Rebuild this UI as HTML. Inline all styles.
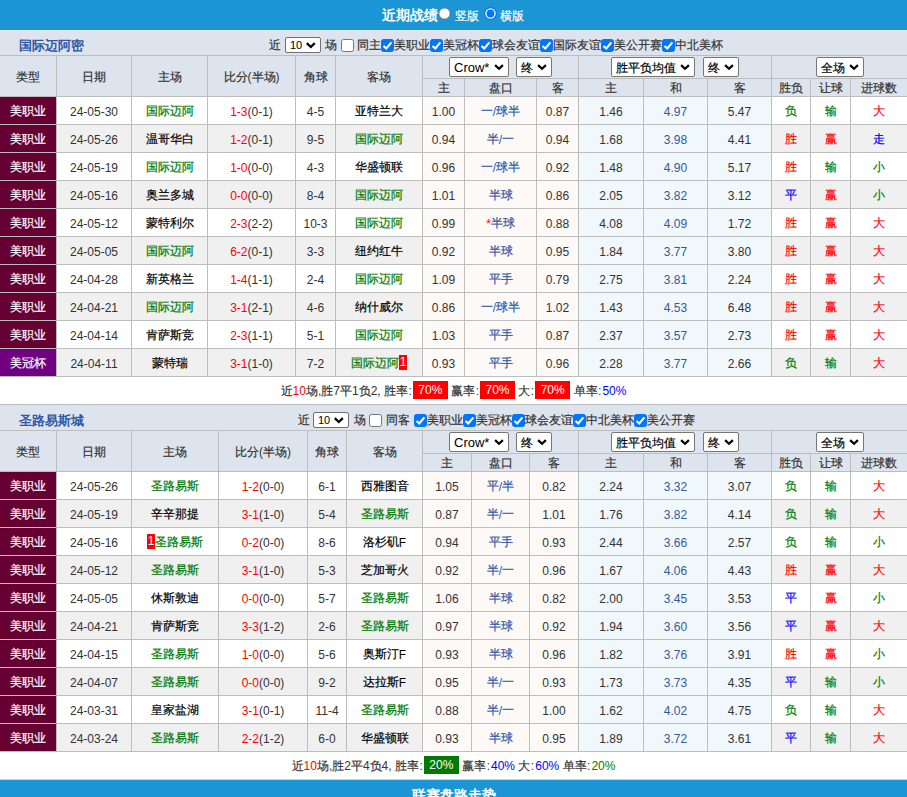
<!DOCTYPE html><html><head><meta charset="utf-8"><style>
*{margin:0;padding:0;box-sizing:border-box}
html,body{width:907px;height:797px;overflow:hidden;background:#fff}
body{font-family:"Liberation Sans",sans-serif;font-size:12px;color:#333;position:relative}
.a{position:absolute}
.k{-webkit-text-stroke:0.2px currentColor}.bt .k{-webkit-text-stroke:0}.tt .k{-webkit-text-stroke:0}
.c{display:flex;align-items:center;justify-content:center;white-space:nowrap}
.sel{height:20px;border:1px solid #767676;border-radius:2px;background:#fff;color:#000}.sel>span{position:absolute;left:4px;top:1px;line-height:18px;white-space:nowrap}.sel svg{position:absolute;right:4px;top:6px}
.ft{height:25px;line-height:25px;font-size:12px;color:#333;white-space:nowrap}
.cb{display:block;width:13px;height:13px;border:1px solid #767676;border-radius:2.5px;background:#fff;position:relative}
.cb.on{background:#0075ff;border-color:#0075ff}
.cb svg{position:absolute;left:-1px;top:-1px}
.smsel{width:36px;height:16px;border:1px solid #707070;border-radius:2px;background:#fff;font-size:11px;color:#000}.smsel>span{position:absolute;left:4px;top:0;line-height:14px}.smsel svg{position:absolute;left:20px;top:4px}
.rd{width:12px;height:12px;border-radius:50%;background:#fff;border:1px solid #767676}
.rd.on{border:none;width:13px;height:13px;background:radial-gradient(circle at 6.5px 6.5px,#0075ff 0,#0075ff 3.6px,#fff 4px,#fff 5.1px,#0075ff 5.5px)}
.rc{background:#f00;color:#fff;display:inline-block;width:8px;text-align:center;line-height:15px;height:15px;position:relative;top:-1px}
.bd{display:inline-block;color:#fff;width:35px;text-align:center;line-height:18px;font-size:12px;margin:0;vertical-align:top;position:relative;top:-2px}
</style></head><body><div class="a" style="left:0px;top:0px;width:907px;height:30px;background:#1b95d4;"></div>
<div class="a bt" style="left:382px;top:0;height:30px;line-height:30px;color:#fff;font-weight:bold;font-size:14px;white-space:nowrap"><span class="k">近期战绩</span></div>
<svg class="a" style="left:437.7px;top:6.8px" width="13" height="13" viewBox="0 0 13 13"><circle cx="6.5" cy="6.5" r="5.6" fill="#fff" stroke="#767676" stroke-width="1"/></svg>
<div class="a" style="left:455px;top:1px;height:30px;line-height:30px;color:#fff;font-size:12px;white-space:nowrap"><span class="k">竖版</span></div>
<svg class="a" style="left:484px;top:6.5px" width="13" height="13" viewBox="0 0 13 13"><circle cx="6.5" cy="6.5" r="6.4" fill="#0075ff"/><circle cx="6.5" cy="6.5" r="5.2" fill="#fff"/><circle cx="6.5" cy="6.5" r="3.9" fill="#0075ff"/></svg>
<div class="a" style="left:500px;top:1px;height:30px;line-height:30px;color:#fff;font-size:12px;white-space:nowrap"><span class="k">横版</span></div>
<div class="a" style="left:0px;top:30px;width:907px;height:25px;background:#dde4ed;"></div>
<div class="a tt" style="left:19px;top:33px;height:25px;line-height:25px;color:#3159a8;font-weight:bold;font-size:13px;"><span class="k">国际迈阿密</span></div>
<div class="a ft" style="left:269px;top:33px"><span class="k">近</span></div><div class="a smsel" style="left:285px;top:37px"><span>10</span><svg width="10" height="7" viewBox="0 0 10 7"><path d="M0.8 1.1 L4.8 5 L8.8 1.1" stroke="#000" stroke-width="2.3" fill="none"/></svg></div><div class="a ft" style="left:325px;top:33px"><span class="k">场</span></div><div class="a" style="left:341px;top:39px"><span class="cb"></span></div><div class="a ft" style="left:357px;top:33px"><span class="k">同主</span></div><div class="a" style="left:381px;top:39px"><span class="cb on"><svg width="13" height="13" viewBox="0 0 13 13"><path d="M2.5 6.9 L5.3 9.5 L10.4 3.4" stroke="#fff" stroke-width="2.1" fill="none"/></svg></span></div><div class="a ft" style="left:394px;top:33px"><span class="k">美职业</span></div><div class="a" style="left:430px;top:39px"><span class="cb on"><svg width="13" height="13" viewBox="0 0 13 13"><path d="M2.5 6.9 L5.3 9.5 L10.4 3.4" stroke="#fff" stroke-width="2.1" fill="none"/></svg></span></div><div class="a ft" style="left:443px;top:33px"><span class="k">美冠杯</span></div><div class="a" style="left:479px;top:39px"><span class="cb on"><svg width="13" height="13" viewBox="0 0 13 13"><path d="M2.5 6.9 L5.3 9.5 L10.4 3.4" stroke="#fff" stroke-width="2.1" fill="none"/></svg></span></div><div class="a ft" style="left:492px;top:33px"><span class="k">球会友谊</span></div><div class="a" style="left:540px;top:39px"><span class="cb on"><svg width="13" height="13" viewBox="0 0 13 13"><path d="M2.5 6.9 L5.3 9.5 L10.4 3.4" stroke="#fff" stroke-width="2.1" fill="none"/></svg></span></div><div class="a ft" style="left:553px;top:33px"><span class="k">国际友谊</span></div><div class="a" style="left:601px;top:39px"><span class="cb on"><svg width="13" height="13" viewBox="0 0 13 13"><path d="M2.5 6.9 L5.3 9.5 L10.4 3.4" stroke="#fff" stroke-width="2.1" fill="none"/></svg></span></div><div class="a ft" style="left:614px;top:33px"><span class="k">美公开赛</span></div><div class="a" style="left:662px;top:39px"><span class="cb on"><svg width="13" height="13" viewBox="0 0 13 13"><path d="M2.5 6.9 L5.3 9.5 L10.4 3.4" stroke="#fff" stroke-width="2.1" fill="none"/></svg></span></div><div class="a ft" style="left:675px;top:33px"><span class="k">中北美杯</span></div>
<div class="a" style="left:0px;top:55px;width:907px;height:1px;background:#bdbdbd;"></div>
<div class="a" style="left:0px;top:56px;width:907px;height:40px;background:#dde4ed;"></div>
<div class="a" style="left:422px;top:78px;width:485px;height:1px;background:#bdbdbd;"></div>
<div class="a" style="left:0px;top:96px;width:907px;height:1px;background:#bdbdbd;"></div>
<div class="a" style="left:56px;top:56px;width:1px;height:40px;background:#bdbdbd;"></div>
<div class="a" style="left:131px;top:56px;width:1px;height:40px;background:#bdbdbd;"></div>
<div class="a" style="left:207px;top:56px;width:1px;height:40px;background:#bdbdbd;"></div>
<div class="a" style="left:295px;top:56px;width:1px;height:40px;background:#bdbdbd;"></div>
<div class="a" style="left:335px;top:56px;width:1px;height:40px;background:#bdbdbd;"></div>
<div class="a" style="left:422px;top:56px;width:1px;height:40px;background:#bdbdbd;"></div>
<div class="a" style="left:464px;top:79px;width:1px;height:17px;background:#bdbdbd;"></div>
<div class="a" style="left:536px;top:79px;width:1px;height:17px;background:#bdbdbd;"></div>
<div class="a" style="left:578px;top:56px;width:1px;height:40px;background:#bdbdbd;"></div>
<div class="a" style="left:643px;top:79px;width:1px;height:17px;background:#bdbdbd;"></div>
<div class="a" style="left:707px;top:79px;width:1px;height:17px;background:#bdbdbd;"></div>
<div class="a" style="left:771px;top:56px;width:1px;height:40px;background:#bdbdbd;"></div>
<div class="a" style="left:810px;top:79px;width:1px;height:17px;background:#bdbdbd;"></div>
<div class="a" style="left:850px;top:79px;width:1px;height:17px;background:#bdbdbd;"></div>
<div class="a" style="left:422px;top:56px;width:1px;height:40px;background:#bdbdbd;"></div>
<div class="a c" style="left:0px;top:57px;width:56px;height:40px;color:#333333;font-size:12px;"><span class="k">类型</span></div>
<div class="a c" style="left:57px;top:57px;width:74px;height:40px;color:#333333;font-size:12px;"><span class="k">日期</span></div>
<div class="a c" style="left:132px;top:57px;width:75px;height:40px;color:#333333;font-size:12px;"><span class="k">主场</span></div>
<div class="a c" style="left:208px;top:57px;width:87px;height:40px;color:#333333;font-size:12px;"><span class="k">比分</span>(<span class="k">半场</span>)</div>
<div class="a c" style="left:296px;top:57px;width:39px;height:40px;color:#333333;font-size:12px;"><span class="k">角球</span></div>
<div class="a c" style="left:336px;top:57px;width:86px;height:40px;color:#333333;font-size:12px;"><span class="k">客场</span></div>
<div class="a c" style="left:423px;top:80px;width:41px;height:17px;color:#333333;font-size:12px;"><span class="k">主</span></div>
<div class="a c" style="left:465px;top:80px;width:71px;height:17px;color:#333333;font-size:12px;"><span class="k">盘口</span></div>
<div class="a c" style="left:537px;top:80px;width:41px;height:17px;color:#333333;font-size:12px;"><span class="k">客</span></div>
<div class="a c" style="left:579px;top:80px;width:64px;height:17px;color:#333333;font-size:12px;"><span class="k">主</span></div>
<div class="a c" style="left:644px;top:80px;width:63px;height:17px;color:#333333;font-size:12px;"><span class="k">和</span></div>
<div class="a c" style="left:708px;top:80px;width:63px;height:17px;color:#333333;font-size:12px;"><span class="k">客</span></div>
<div class="a c" style="left:772px;top:80px;width:38px;height:17px;color:#333333;font-size:12px;"><span class="k">胜负</span></div>
<div class="a c" style="left:811px;top:80px;width:39px;height:17px;color:#333333;font-size:12px;"><span class="k">让球</span></div>
<div class="a c" style="left:851px;top:80px;width:56px;height:17px;color:#333333;font-size:12px;"><span class="k">进球数</span></div>
<div class="a sel" style="left:449px;top:57px;width:60px;"><span style="font-size:13px">Crow*</span><svg width="10" height="7" viewBox="0 0 10 7"><path d="M1.1 1.1 L5 4.8 L8.9 1.1" stroke="#000" stroke-width="2.2" fill="none"/></svg></div>
<div class="a sel" style="left:516px;top:57px;width:36px;"><span style="font-size:12px"><span class="k">终</span></span><svg width="10" height="7" viewBox="0 0 10 7"><path d="M1.1 1.1 L5 4.8 L8.9 1.1" stroke="#000" stroke-width="2.2" fill="none"/></svg></div>
<div class="a sel" style="left:611px;top:57px;width:84px;"><span style="font-size:12px"><span class="k">胜平负均值</span></span><svg width="10" height="7" viewBox="0 0 10 7"><path d="M1.1 1.1 L5 4.8 L8.9 1.1" stroke="#000" stroke-width="2.2" fill="none"/></svg></div>
<div class="a sel" style="left:703px;top:57px;width:36px;"><span style="font-size:12px"><span class="k">终</span></span><svg width="10" height="7" viewBox="0 0 10 7"><path d="M1.1 1.1 L5 4.8 L8.9 1.1" stroke="#000" stroke-width="2.2" fill="none"/></svg></div>
<div class="a sel" style="left:816px;top:57px;width:48px;"><span style="font-size:12px"><span class="k">全场</span></span><svg width="10" height="7" viewBox="0 0 10 7"><path d="M1.1 1.1 L5 4.8 L8.9 1.1" stroke="#000" stroke-width="2.2" fill="none"/></svg></div>
<div class="a" style="left:0px;top:97px;width:907px;height:27px;background:#ffffff;"></div>
<div class="a" style="left:0px;top:97px;width:56px;height:27px;background:#660033;"></div>
<div class="a" style="left:423px;top:97px;width:155px;height:27px;background:#fdf9f6;"></div>
<div class="a" style="left:579px;top:97px;width:192px;height:27px;background:#f0f8fc;"></div>
<div class="a c" style="left:0px;top:98px;width:56px;height:27px;color:#ffffff;font-size:12px;"><span class="k">美职业</span></div>
<div class="a c" style="left:57px;top:98px;width:74px;height:27px;color:#333333;font-size:12px;">24-05-30</div>
<div class="a c" style="left:132px;top:98px;width:75px;height:27px;color:#007a00;font-size:12px;"><span class="k">国际迈阿</span></div>
<div class="a c" style="left:208px;top:98px;width:87px;height:27px;color:#333333;font-size:12px;"><span style="color:#ff0000">1-3</span>(0-1)</div>
<div class="a c" style="left:296px;top:98px;width:39px;height:27px;color:#333333;font-size:12px;">4-5</div>
<div class="a c ns" style="left:336px;top:98px;width:86px;height:27px;color:#000;font-size:12px;"><span class="k">亚特兰大</span></div>
<div class="a c" style="left:423px;top:98px;width:41px;height:27px;color:#333333;font-size:12px;">1.00</div>
<div class="a c" style="left:465px;top:98px;width:71px;height:27px;color:#2f58a6;font-size:12px;"><span class="k">一</span>/<span class="k">球半</span></div>
<div class="a c" style="left:537px;top:98px;width:41px;height:27px;color:#333333;font-size:12px;">0.87</div>
<div class="a c" style="left:579px;top:98px;width:64px;height:27px;color:#333333;font-size:12px;">1.46</div>
<div class="a c" style="left:644px;top:98px;width:63px;height:27px;color:#34589c;font-size:12px;">4.97</div>
<div class="a c" style="left:708px;top:98px;width:63px;height:27px;color:#333333;font-size:12px;">5.47</div>
<div class="a c" style="left:772px;top:98px;width:38px;height:27px;color:#007a00;font-size:12px;"><span class="k">负</span></div>
<div class="a c" style="left:811px;top:98px;width:39px;height:27px;color:#007a00;font-size:12px;"><span class="k">输</span></div>
<div class="a c" style="left:851px;top:98px;width:56px;height:27px;color:#ff0000;font-size:12px;"><span class="k">大</span></div>
<div class="a" style="left:0px;top:124px;width:907px;height:1px;background:#bdbdbd;"></div>
<div class="a" style="left:56px;top:97px;width:1px;height:27px;background:#bdbdbd;"></div>
<div class="a" style="left:131px;top:97px;width:1px;height:27px;background:#bdbdbd;"></div>
<div class="a" style="left:207px;top:97px;width:1px;height:27px;background:#bdbdbd;"></div>
<div class="a" style="left:295px;top:97px;width:1px;height:27px;background:#bdbdbd;"></div>
<div class="a" style="left:335px;top:97px;width:1px;height:27px;background:#bdbdbd;"></div>
<div class="a" style="left:422px;top:97px;width:1px;height:27px;background:#bdbdbd;"></div>
<div class="a" style="left:464px;top:97px;width:1px;height:27px;background:#bdbdbd;"></div>
<div class="a" style="left:536px;top:97px;width:1px;height:27px;background:#bdbdbd;"></div>
<div class="a" style="left:578px;top:97px;width:1px;height:27px;background:#bdbdbd;"></div>
<div class="a" style="left:643px;top:97px;width:1px;height:27px;background:#bdbdbd;"></div>
<div class="a" style="left:707px;top:97px;width:1px;height:27px;background:#bdbdbd;"></div>
<div class="a" style="left:771px;top:97px;width:1px;height:27px;background:#bdbdbd;"></div>
<div class="a" style="left:810px;top:97px;width:1px;height:27px;background:#bdbdbd;"></div>
<div class="a" style="left:850px;top:97px;width:1px;height:27px;background:#bdbdbd;"></div>
<div class="a" style="left:0px;top:125px;width:907px;height:27px;background:#f0f0f0;"></div>
<div class="a" style="left:0px;top:125px;width:56px;height:27px;background:#660033;"></div>
<div class="a" style="left:423px;top:125px;width:155px;height:27px;background:#fdf9f6;"></div>
<div class="a" style="left:579px;top:125px;width:192px;height:27px;background:#f0f8fc;"></div>
<div class="a c" style="left:0px;top:126px;width:56px;height:27px;color:#ffffff;font-size:12px;"><span class="k">美职业</span></div>
<div class="a c" style="left:57px;top:126px;width:74px;height:27px;color:#333333;font-size:12px;">24-05-26</div>
<div class="a c ns" style="left:132px;top:126px;width:75px;height:27px;color:#000;font-size:12px;"><span class="k">温哥华白</span></div>
<div class="a c" style="left:208px;top:126px;width:87px;height:27px;color:#333333;font-size:12px;"><span style="color:#ff0000">1-2</span>(0-1)</div>
<div class="a c" style="left:296px;top:126px;width:39px;height:27px;color:#333333;font-size:12px;">9-5</div>
<div class="a c" style="left:336px;top:126px;width:86px;height:27px;color:#007a00;font-size:12px;"><span class="k">国际迈阿</span></div>
<div class="a c" style="left:423px;top:126px;width:41px;height:27px;color:#333333;font-size:12px;">0.94</div>
<div class="a c" style="left:465px;top:126px;width:71px;height:27px;color:#2f58a6;font-size:12px;"><span class="k">半</span>/<span class="k">一</span></div>
<div class="a c" style="left:537px;top:126px;width:41px;height:27px;color:#333333;font-size:12px;">0.94</div>
<div class="a c" style="left:579px;top:126px;width:64px;height:27px;color:#333333;font-size:12px;">1.68</div>
<div class="a c" style="left:644px;top:126px;width:63px;height:27px;color:#34589c;font-size:12px;">3.98</div>
<div class="a c" style="left:708px;top:126px;width:63px;height:27px;color:#333333;font-size:12px;">4.41</div>
<div class="a c" style="left:772px;top:126px;width:38px;height:27px;color:#ff0000;font-size:12px;"><span class="k">胜</span></div>
<div class="a c" style="left:811px;top:126px;width:39px;height:27px;color:#ff0000;font-size:12px;"><span class="k">赢</span></div>
<div class="a c" style="left:851px;top:126px;width:56px;height:27px;color:#0000ff;font-size:12px;"><span class="k">走</span></div>
<div class="a" style="left:0px;top:152px;width:907px;height:1px;background:#bdbdbd;"></div>
<div class="a" style="left:56px;top:125px;width:1px;height:27px;background:#bdbdbd;"></div>
<div class="a" style="left:131px;top:125px;width:1px;height:27px;background:#bdbdbd;"></div>
<div class="a" style="left:207px;top:125px;width:1px;height:27px;background:#bdbdbd;"></div>
<div class="a" style="left:295px;top:125px;width:1px;height:27px;background:#bdbdbd;"></div>
<div class="a" style="left:335px;top:125px;width:1px;height:27px;background:#bdbdbd;"></div>
<div class="a" style="left:422px;top:125px;width:1px;height:27px;background:#bdbdbd;"></div>
<div class="a" style="left:464px;top:125px;width:1px;height:27px;background:#bdbdbd;"></div>
<div class="a" style="left:536px;top:125px;width:1px;height:27px;background:#bdbdbd;"></div>
<div class="a" style="left:578px;top:125px;width:1px;height:27px;background:#bdbdbd;"></div>
<div class="a" style="left:643px;top:125px;width:1px;height:27px;background:#bdbdbd;"></div>
<div class="a" style="left:707px;top:125px;width:1px;height:27px;background:#bdbdbd;"></div>
<div class="a" style="left:771px;top:125px;width:1px;height:27px;background:#bdbdbd;"></div>
<div class="a" style="left:810px;top:125px;width:1px;height:27px;background:#bdbdbd;"></div>
<div class="a" style="left:850px;top:125px;width:1px;height:27px;background:#bdbdbd;"></div>
<div class="a" style="left:0px;top:153px;width:907px;height:27px;background:#ffffff;"></div>
<div class="a" style="left:0px;top:153px;width:56px;height:27px;background:#660033;"></div>
<div class="a" style="left:423px;top:153px;width:155px;height:27px;background:#fdf9f6;"></div>
<div class="a" style="left:579px;top:153px;width:192px;height:27px;background:#f0f8fc;"></div>
<div class="a c" style="left:0px;top:154px;width:56px;height:27px;color:#ffffff;font-size:12px;"><span class="k">美职业</span></div>
<div class="a c" style="left:57px;top:154px;width:74px;height:27px;color:#333333;font-size:12px;">24-05-19</div>
<div class="a c" style="left:132px;top:154px;width:75px;height:27px;color:#007a00;font-size:12px;"><span class="k">国际迈阿</span></div>
<div class="a c" style="left:208px;top:154px;width:87px;height:27px;color:#333333;font-size:12px;"><span style="color:#ff0000">1-0</span>(0-0)</div>
<div class="a c" style="left:296px;top:154px;width:39px;height:27px;color:#333333;font-size:12px;">4-3</div>
<div class="a c ns" style="left:336px;top:154px;width:86px;height:27px;color:#000;font-size:12px;"><span class="k">华盛顿联</span></div>
<div class="a c" style="left:423px;top:154px;width:41px;height:27px;color:#333333;font-size:12px;">0.96</div>
<div class="a c" style="left:465px;top:154px;width:71px;height:27px;color:#2f58a6;font-size:12px;"><span class="k">一</span>/<span class="k">球半</span></div>
<div class="a c" style="left:537px;top:154px;width:41px;height:27px;color:#333333;font-size:12px;">0.92</div>
<div class="a c" style="left:579px;top:154px;width:64px;height:27px;color:#333333;font-size:12px;">1.48</div>
<div class="a c" style="left:644px;top:154px;width:63px;height:27px;color:#34589c;font-size:12px;">4.90</div>
<div class="a c" style="left:708px;top:154px;width:63px;height:27px;color:#333333;font-size:12px;">5.17</div>
<div class="a c" style="left:772px;top:154px;width:38px;height:27px;color:#ff0000;font-size:12px;"><span class="k">胜</span></div>
<div class="a c" style="left:811px;top:154px;width:39px;height:27px;color:#007a00;font-size:12px;"><span class="k">输</span></div>
<div class="a c" style="left:851px;top:154px;width:56px;height:27px;color:#007a00;font-size:12px;"><span class="k">小</span></div>
<div class="a" style="left:0px;top:180px;width:907px;height:1px;background:#bdbdbd;"></div>
<div class="a" style="left:56px;top:153px;width:1px;height:27px;background:#bdbdbd;"></div>
<div class="a" style="left:131px;top:153px;width:1px;height:27px;background:#bdbdbd;"></div>
<div class="a" style="left:207px;top:153px;width:1px;height:27px;background:#bdbdbd;"></div>
<div class="a" style="left:295px;top:153px;width:1px;height:27px;background:#bdbdbd;"></div>
<div class="a" style="left:335px;top:153px;width:1px;height:27px;background:#bdbdbd;"></div>
<div class="a" style="left:422px;top:153px;width:1px;height:27px;background:#bdbdbd;"></div>
<div class="a" style="left:464px;top:153px;width:1px;height:27px;background:#bdbdbd;"></div>
<div class="a" style="left:536px;top:153px;width:1px;height:27px;background:#bdbdbd;"></div>
<div class="a" style="left:578px;top:153px;width:1px;height:27px;background:#bdbdbd;"></div>
<div class="a" style="left:643px;top:153px;width:1px;height:27px;background:#bdbdbd;"></div>
<div class="a" style="left:707px;top:153px;width:1px;height:27px;background:#bdbdbd;"></div>
<div class="a" style="left:771px;top:153px;width:1px;height:27px;background:#bdbdbd;"></div>
<div class="a" style="left:810px;top:153px;width:1px;height:27px;background:#bdbdbd;"></div>
<div class="a" style="left:850px;top:153px;width:1px;height:27px;background:#bdbdbd;"></div>
<div class="a" style="left:0px;top:181px;width:907px;height:27px;background:#f0f0f0;"></div>
<div class="a" style="left:0px;top:181px;width:56px;height:27px;background:#660033;"></div>
<div class="a" style="left:423px;top:181px;width:155px;height:27px;background:#fdf9f6;"></div>
<div class="a" style="left:579px;top:181px;width:192px;height:27px;background:#f0f8fc;"></div>
<div class="a c" style="left:0px;top:182px;width:56px;height:27px;color:#ffffff;font-size:12px;"><span class="k">美职业</span></div>
<div class="a c" style="left:57px;top:182px;width:74px;height:27px;color:#333333;font-size:12px;">24-05-16</div>
<div class="a c ns" style="left:132px;top:182px;width:75px;height:27px;color:#000;font-size:12px;"><span class="k">奥兰多城</span></div>
<div class="a c" style="left:208px;top:182px;width:87px;height:27px;color:#333333;font-size:12px;"><span style="color:#ff0000">0-0</span>(0-0)</div>
<div class="a c" style="left:296px;top:182px;width:39px;height:27px;color:#333333;font-size:12px;">8-4</div>
<div class="a c" style="left:336px;top:182px;width:86px;height:27px;color:#007a00;font-size:12px;"><span class="k">国际迈阿</span></div>
<div class="a c" style="left:423px;top:182px;width:41px;height:27px;color:#333333;font-size:12px;">1.01</div>
<div class="a c" style="left:465px;top:182px;width:71px;height:27px;color:#2f58a6;font-size:12px;"><span class="k">半球</span></div>
<div class="a c" style="left:537px;top:182px;width:41px;height:27px;color:#333333;font-size:12px;">0.86</div>
<div class="a c" style="left:579px;top:182px;width:64px;height:27px;color:#333333;font-size:12px;">2.05</div>
<div class="a c" style="left:644px;top:182px;width:63px;height:27px;color:#34589c;font-size:12px;">3.82</div>
<div class="a c" style="left:708px;top:182px;width:63px;height:27px;color:#333333;font-size:12px;">3.12</div>
<div class="a c" style="left:772px;top:182px;width:38px;height:27px;color:#0000ff;font-size:12px;"><span class="k">平</span></div>
<div class="a c" style="left:811px;top:182px;width:39px;height:27px;color:#ff0000;font-size:12px;"><span class="k">赢</span></div>
<div class="a c" style="left:851px;top:182px;width:56px;height:27px;color:#007a00;font-size:12px;"><span class="k">小</span></div>
<div class="a" style="left:0px;top:208px;width:907px;height:1px;background:#bdbdbd;"></div>
<div class="a" style="left:56px;top:181px;width:1px;height:27px;background:#bdbdbd;"></div>
<div class="a" style="left:131px;top:181px;width:1px;height:27px;background:#bdbdbd;"></div>
<div class="a" style="left:207px;top:181px;width:1px;height:27px;background:#bdbdbd;"></div>
<div class="a" style="left:295px;top:181px;width:1px;height:27px;background:#bdbdbd;"></div>
<div class="a" style="left:335px;top:181px;width:1px;height:27px;background:#bdbdbd;"></div>
<div class="a" style="left:422px;top:181px;width:1px;height:27px;background:#bdbdbd;"></div>
<div class="a" style="left:464px;top:181px;width:1px;height:27px;background:#bdbdbd;"></div>
<div class="a" style="left:536px;top:181px;width:1px;height:27px;background:#bdbdbd;"></div>
<div class="a" style="left:578px;top:181px;width:1px;height:27px;background:#bdbdbd;"></div>
<div class="a" style="left:643px;top:181px;width:1px;height:27px;background:#bdbdbd;"></div>
<div class="a" style="left:707px;top:181px;width:1px;height:27px;background:#bdbdbd;"></div>
<div class="a" style="left:771px;top:181px;width:1px;height:27px;background:#bdbdbd;"></div>
<div class="a" style="left:810px;top:181px;width:1px;height:27px;background:#bdbdbd;"></div>
<div class="a" style="left:850px;top:181px;width:1px;height:27px;background:#bdbdbd;"></div>
<div class="a" style="left:0px;top:209px;width:907px;height:27px;background:#ffffff;"></div>
<div class="a" style="left:0px;top:209px;width:56px;height:27px;background:#660033;"></div>
<div class="a" style="left:423px;top:209px;width:155px;height:27px;background:#fdf9f6;"></div>
<div class="a" style="left:579px;top:209px;width:192px;height:27px;background:#f0f8fc;"></div>
<div class="a c" style="left:0px;top:210px;width:56px;height:27px;color:#ffffff;font-size:12px;"><span class="k">美职业</span></div>
<div class="a c" style="left:57px;top:210px;width:74px;height:27px;color:#333333;font-size:12px;">24-05-12</div>
<div class="a c ns" style="left:132px;top:210px;width:75px;height:27px;color:#000;font-size:12px;"><span class="k">蒙特利尔</span></div>
<div class="a c" style="left:208px;top:210px;width:87px;height:27px;color:#333333;font-size:12px;"><span style="color:#ff0000">2-3</span>(2-2)</div>
<div class="a c" style="left:296px;top:210px;width:39px;height:27px;color:#333333;font-size:12px;">10-3</div>
<div class="a c" style="left:336px;top:210px;width:86px;height:27px;color:#007a00;font-size:12px;"><span class="k">国际迈阿</span></div>
<div class="a c" style="left:423px;top:210px;width:41px;height:27px;color:#333333;font-size:12px;">0.99</div>
<div class="a c" style="left:465px;top:210px;width:71px;height:27px;color:#2f58a6;font-size:12px;"><span style="color:#ff0000">*</span><span class="k">半球</span></div>
<div class="a c" style="left:537px;top:210px;width:41px;height:27px;color:#333333;font-size:12px;">0.88</div>
<div class="a c" style="left:579px;top:210px;width:64px;height:27px;color:#333333;font-size:12px;">4.08</div>
<div class="a c" style="left:644px;top:210px;width:63px;height:27px;color:#34589c;font-size:12px;">4.09</div>
<div class="a c" style="left:708px;top:210px;width:63px;height:27px;color:#333333;font-size:12px;">1.72</div>
<div class="a c" style="left:772px;top:210px;width:38px;height:27px;color:#ff0000;font-size:12px;"><span class="k">胜</span></div>
<div class="a c" style="left:811px;top:210px;width:39px;height:27px;color:#ff0000;font-size:12px;"><span class="k">赢</span></div>
<div class="a c" style="left:851px;top:210px;width:56px;height:27px;color:#ff0000;font-size:12px;"><span class="k">大</span></div>
<div class="a" style="left:0px;top:236px;width:907px;height:1px;background:#bdbdbd;"></div>
<div class="a" style="left:56px;top:209px;width:1px;height:27px;background:#bdbdbd;"></div>
<div class="a" style="left:131px;top:209px;width:1px;height:27px;background:#bdbdbd;"></div>
<div class="a" style="left:207px;top:209px;width:1px;height:27px;background:#bdbdbd;"></div>
<div class="a" style="left:295px;top:209px;width:1px;height:27px;background:#bdbdbd;"></div>
<div class="a" style="left:335px;top:209px;width:1px;height:27px;background:#bdbdbd;"></div>
<div class="a" style="left:422px;top:209px;width:1px;height:27px;background:#bdbdbd;"></div>
<div class="a" style="left:464px;top:209px;width:1px;height:27px;background:#bdbdbd;"></div>
<div class="a" style="left:536px;top:209px;width:1px;height:27px;background:#bdbdbd;"></div>
<div class="a" style="left:578px;top:209px;width:1px;height:27px;background:#bdbdbd;"></div>
<div class="a" style="left:643px;top:209px;width:1px;height:27px;background:#bdbdbd;"></div>
<div class="a" style="left:707px;top:209px;width:1px;height:27px;background:#bdbdbd;"></div>
<div class="a" style="left:771px;top:209px;width:1px;height:27px;background:#bdbdbd;"></div>
<div class="a" style="left:810px;top:209px;width:1px;height:27px;background:#bdbdbd;"></div>
<div class="a" style="left:850px;top:209px;width:1px;height:27px;background:#bdbdbd;"></div>
<div class="a" style="left:0px;top:237px;width:907px;height:27px;background:#f0f0f0;"></div>
<div class="a" style="left:0px;top:237px;width:56px;height:27px;background:#660033;"></div>
<div class="a" style="left:423px;top:237px;width:155px;height:27px;background:#fdf9f6;"></div>
<div class="a" style="left:579px;top:237px;width:192px;height:27px;background:#f0f8fc;"></div>
<div class="a c" style="left:0px;top:238px;width:56px;height:27px;color:#ffffff;font-size:12px;"><span class="k">美职业</span></div>
<div class="a c" style="left:57px;top:238px;width:74px;height:27px;color:#333333;font-size:12px;">24-05-05</div>
<div class="a c" style="left:132px;top:238px;width:75px;height:27px;color:#007a00;font-size:12px;"><span class="k">国际迈阿</span></div>
<div class="a c" style="left:208px;top:238px;width:87px;height:27px;color:#333333;font-size:12px;"><span style="color:#ff0000">6-2</span>(0-1)</div>
<div class="a c" style="left:296px;top:238px;width:39px;height:27px;color:#333333;font-size:12px;">3-3</div>
<div class="a c ns" style="left:336px;top:238px;width:86px;height:27px;color:#000;font-size:12px;"><span class="k">纽约红牛</span></div>
<div class="a c" style="left:423px;top:238px;width:41px;height:27px;color:#333333;font-size:12px;">0.92</div>
<div class="a c" style="left:465px;top:238px;width:71px;height:27px;color:#2f58a6;font-size:12px;"><span class="k">半球</span></div>
<div class="a c" style="left:537px;top:238px;width:41px;height:27px;color:#333333;font-size:12px;">0.95</div>
<div class="a c" style="left:579px;top:238px;width:64px;height:27px;color:#333333;font-size:12px;">1.84</div>
<div class="a c" style="left:644px;top:238px;width:63px;height:27px;color:#34589c;font-size:12px;">3.77</div>
<div class="a c" style="left:708px;top:238px;width:63px;height:27px;color:#333333;font-size:12px;">3.80</div>
<div class="a c" style="left:772px;top:238px;width:38px;height:27px;color:#ff0000;font-size:12px;"><span class="k">胜</span></div>
<div class="a c" style="left:811px;top:238px;width:39px;height:27px;color:#ff0000;font-size:12px;"><span class="k">赢</span></div>
<div class="a c" style="left:851px;top:238px;width:56px;height:27px;color:#ff0000;font-size:12px;"><span class="k">大</span></div>
<div class="a" style="left:0px;top:264px;width:907px;height:1px;background:#bdbdbd;"></div>
<div class="a" style="left:56px;top:237px;width:1px;height:27px;background:#bdbdbd;"></div>
<div class="a" style="left:131px;top:237px;width:1px;height:27px;background:#bdbdbd;"></div>
<div class="a" style="left:207px;top:237px;width:1px;height:27px;background:#bdbdbd;"></div>
<div class="a" style="left:295px;top:237px;width:1px;height:27px;background:#bdbdbd;"></div>
<div class="a" style="left:335px;top:237px;width:1px;height:27px;background:#bdbdbd;"></div>
<div class="a" style="left:422px;top:237px;width:1px;height:27px;background:#bdbdbd;"></div>
<div class="a" style="left:464px;top:237px;width:1px;height:27px;background:#bdbdbd;"></div>
<div class="a" style="left:536px;top:237px;width:1px;height:27px;background:#bdbdbd;"></div>
<div class="a" style="left:578px;top:237px;width:1px;height:27px;background:#bdbdbd;"></div>
<div class="a" style="left:643px;top:237px;width:1px;height:27px;background:#bdbdbd;"></div>
<div class="a" style="left:707px;top:237px;width:1px;height:27px;background:#bdbdbd;"></div>
<div class="a" style="left:771px;top:237px;width:1px;height:27px;background:#bdbdbd;"></div>
<div class="a" style="left:810px;top:237px;width:1px;height:27px;background:#bdbdbd;"></div>
<div class="a" style="left:850px;top:237px;width:1px;height:27px;background:#bdbdbd;"></div>
<div class="a" style="left:0px;top:265px;width:907px;height:27px;background:#ffffff;"></div>
<div class="a" style="left:0px;top:265px;width:56px;height:27px;background:#660033;"></div>
<div class="a" style="left:423px;top:265px;width:155px;height:27px;background:#fdf9f6;"></div>
<div class="a" style="left:579px;top:265px;width:192px;height:27px;background:#f0f8fc;"></div>
<div class="a c" style="left:0px;top:266px;width:56px;height:27px;color:#ffffff;font-size:12px;"><span class="k">美职业</span></div>
<div class="a c" style="left:57px;top:266px;width:74px;height:27px;color:#333333;font-size:12px;">24-04-28</div>
<div class="a c ns" style="left:132px;top:266px;width:75px;height:27px;color:#000;font-size:12px;"><span class="k">新英格兰</span></div>
<div class="a c" style="left:208px;top:266px;width:87px;height:27px;color:#333333;font-size:12px;"><span style="color:#ff0000">1-4</span>(1-1)</div>
<div class="a c" style="left:296px;top:266px;width:39px;height:27px;color:#333333;font-size:12px;">2-4</div>
<div class="a c" style="left:336px;top:266px;width:86px;height:27px;color:#007a00;font-size:12px;"><span class="k">国际迈阿</span></div>
<div class="a c" style="left:423px;top:266px;width:41px;height:27px;color:#333333;font-size:12px;">1.09</div>
<div class="a c" style="left:465px;top:266px;width:71px;height:27px;color:#2f58a6;font-size:12px;"><span class="k">平手</span></div>
<div class="a c" style="left:537px;top:266px;width:41px;height:27px;color:#333333;font-size:12px;">0.79</div>
<div class="a c" style="left:579px;top:266px;width:64px;height:27px;color:#333333;font-size:12px;">2.75</div>
<div class="a c" style="left:644px;top:266px;width:63px;height:27px;color:#34589c;font-size:12px;">3.81</div>
<div class="a c" style="left:708px;top:266px;width:63px;height:27px;color:#333333;font-size:12px;">2.24</div>
<div class="a c" style="left:772px;top:266px;width:38px;height:27px;color:#ff0000;font-size:12px;"><span class="k">胜</span></div>
<div class="a c" style="left:811px;top:266px;width:39px;height:27px;color:#ff0000;font-size:12px;"><span class="k">赢</span></div>
<div class="a c" style="left:851px;top:266px;width:56px;height:27px;color:#ff0000;font-size:12px;"><span class="k">大</span></div>
<div class="a" style="left:0px;top:292px;width:907px;height:1px;background:#bdbdbd;"></div>
<div class="a" style="left:56px;top:265px;width:1px;height:27px;background:#bdbdbd;"></div>
<div class="a" style="left:131px;top:265px;width:1px;height:27px;background:#bdbdbd;"></div>
<div class="a" style="left:207px;top:265px;width:1px;height:27px;background:#bdbdbd;"></div>
<div class="a" style="left:295px;top:265px;width:1px;height:27px;background:#bdbdbd;"></div>
<div class="a" style="left:335px;top:265px;width:1px;height:27px;background:#bdbdbd;"></div>
<div class="a" style="left:422px;top:265px;width:1px;height:27px;background:#bdbdbd;"></div>
<div class="a" style="left:464px;top:265px;width:1px;height:27px;background:#bdbdbd;"></div>
<div class="a" style="left:536px;top:265px;width:1px;height:27px;background:#bdbdbd;"></div>
<div class="a" style="left:578px;top:265px;width:1px;height:27px;background:#bdbdbd;"></div>
<div class="a" style="left:643px;top:265px;width:1px;height:27px;background:#bdbdbd;"></div>
<div class="a" style="left:707px;top:265px;width:1px;height:27px;background:#bdbdbd;"></div>
<div class="a" style="left:771px;top:265px;width:1px;height:27px;background:#bdbdbd;"></div>
<div class="a" style="left:810px;top:265px;width:1px;height:27px;background:#bdbdbd;"></div>
<div class="a" style="left:850px;top:265px;width:1px;height:27px;background:#bdbdbd;"></div>
<div class="a" style="left:0px;top:293px;width:907px;height:27px;background:#f0f0f0;"></div>
<div class="a" style="left:0px;top:293px;width:56px;height:27px;background:#660033;"></div>
<div class="a" style="left:423px;top:293px;width:155px;height:27px;background:#fdf9f6;"></div>
<div class="a" style="left:579px;top:293px;width:192px;height:27px;background:#f0f8fc;"></div>
<div class="a c" style="left:0px;top:294px;width:56px;height:27px;color:#ffffff;font-size:12px;"><span class="k">美职业</span></div>
<div class="a c" style="left:57px;top:294px;width:74px;height:27px;color:#333333;font-size:12px;">24-04-21</div>
<div class="a c" style="left:132px;top:294px;width:75px;height:27px;color:#007a00;font-size:12px;"><span class="k">国际迈阿</span></div>
<div class="a c" style="left:208px;top:294px;width:87px;height:27px;color:#333333;font-size:12px;"><span style="color:#ff0000">3-1</span>(2-1)</div>
<div class="a c" style="left:296px;top:294px;width:39px;height:27px;color:#333333;font-size:12px;">4-6</div>
<div class="a c ns" style="left:336px;top:294px;width:86px;height:27px;color:#000;font-size:12px;"><span class="k">纳什威尔</span></div>
<div class="a c" style="left:423px;top:294px;width:41px;height:27px;color:#333333;font-size:12px;">0.86</div>
<div class="a c" style="left:465px;top:294px;width:71px;height:27px;color:#2f58a6;font-size:12px;"><span class="k">一</span>/<span class="k">球半</span></div>
<div class="a c" style="left:537px;top:294px;width:41px;height:27px;color:#333333;font-size:12px;">1.02</div>
<div class="a c" style="left:579px;top:294px;width:64px;height:27px;color:#333333;font-size:12px;">1.43</div>
<div class="a c" style="left:644px;top:294px;width:63px;height:27px;color:#34589c;font-size:12px;">4.53</div>
<div class="a c" style="left:708px;top:294px;width:63px;height:27px;color:#333333;font-size:12px;">6.48</div>
<div class="a c" style="left:772px;top:294px;width:38px;height:27px;color:#ff0000;font-size:12px;"><span class="k">胜</span></div>
<div class="a c" style="left:811px;top:294px;width:39px;height:27px;color:#ff0000;font-size:12px;"><span class="k">赢</span></div>
<div class="a c" style="left:851px;top:294px;width:56px;height:27px;color:#ff0000;font-size:12px;"><span class="k">大</span></div>
<div class="a" style="left:0px;top:320px;width:907px;height:1px;background:#bdbdbd;"></div>
<div class="a" style="left:56px;top:293px;width:1px;height:27px;background:#bdbdbd;"></div>
<div class="a" style="left:131px;top:293px;width:1px;height:27px;background:#bdbdbd;"></div>
<div class="a" style="left:207px;top:293px;width:1px;height:27px;background:#bdbdbd;"></div>
<div class="a" style="left:295px;top:293px;width:1px;height:27px;background:#bdbdbd;"></div>
<div class="a" style="left:335px;top:293px;width:1px;height:27px;background:#bdbdbd;"></div>
<div class="a" style="left:422px;top:293px;width:1px;height:27px;background:#bdbdbd;"></div>
<div class="a" style="left:464px;top:293px;width:1px;height:27px;background:#bdbdbd;"></div>
<div class="a" style="left:536px;top:293px;width:1px;height:27px;background:#bdbdbd;"></div>
<div class="a" style="left:578px;top:293px;width:1px;height:27px;background:#bdbdbd;"></div>
<div class="a" style="left:643px;top:293px;width:1px;height:27px;background:#bdbdbd;"></div>
<div class="a" style="left:707px;top:293px;width:1px;height:27px;background:#bdbdbd;"></div>
<div class="a" style="left:771px;top:293px;width:1px;height:27px;background:#bdbdbd;"></div>
<div class="a" style="left:810px;top:293px;width:1px;height:27px;background:#bdbdbd;"></div>
<div class="a" style="left:850px;top:293px;width:1px;height:27px;background:#bdbdbd;"></div>
<div class="a" style="left:0px;top:321px;width:907px;height:27px;background:#ffffff;"></div>
<div class="a" style="left:0px;top:321px;width:56px;height:27px;background:#660033;"></div>
<div class="a" style="left:423px;top:321px;width:155px;height:27px;background:#fdf9f6;"></div>
<div class="a" style="left:579px;top:321px;width:192px;height:27px;background:#f0f8fc;"></div>
<div class="a c" style="left:0px;top:322px;width:56px;height:27px;color:#ffffff;font-size:12px;"><span class="k">美职业</span></div>
<div class="a c" style="left:57px;top:322px;width:74px;height:27px;color:#333333;font-size:12px;">24-04-14</div>
<div class="a c ns" style="left:132px;top:322px;width:75px;height:27px;color:#000;font-size:12px;"><span class="k">肯萨斯竞</span></div>
<div class="a c" style="left:208px;top:322px;width:87px;height:27px;color:#333333;font-size:12px;"><span style="color:#ff0000">2-3</span>(1-1)</div>
<div class="a c" style="left:296px;top:322px;width:39px;height:27px;color:#333333;font-size:12px;">5-1</div>
<div class="a c" style="left:336px;top:322px;width:86px;height:27px;color:#007a00;font-size:12px;"><span class="k">国际迈阿</span></div>
<div class="a c" style="left:423px;top:322px;width:41px;height:27px;color:#333333;font-size:12px;">1.03</div>
<div class="a c" style="left:465px;top:322px;width:71px;height:27px;color:#2f58a6;font-size:12px;"><span class="k">平手</span></div>
<div class="a c" style="left:537px;top:322px;width:41px;height:27px;color:#333333;font-size:12px;">0.87</div>
<div class="a c" style="left:579px;top:322px;width:64px;height:27px;color:#333333;font-size:12px;">2.37</div>
<div class="a c" style="left:644px;top:322px;width:63px;height:27px;color:#34589c;font-size:12px;">3.57</div>
<div class="a c" style="left:708px;top:322px;width:63px;height:27px;color:#333333;font-size:12px;">2.73</div>
<div class="a c" style="left:772px;top:322px;width:38px;height:27px;color:#ff0000;font-size:12px;"><span class="k">胜</span></div>
<div class="a c" style="left:811px;top:322px;width:39px;height:27px;color:#ff0000;font-size:12px;"><span class="k">赢</span></div>
<div class="a c" style="left:851px;top:322px;width:56px;height:27px;color:#ff0000;font-size:12px;"><span class="k">大</span></div>
<div class="a" style="left:0px;top:348px;width:907px;height:1px;background:#bdbdbd;"></div>
<div class="a" style="left:56px;top:321px;width:1px;height:27px;background:#bdbdbd;"></div>
<div class="a" style="left:131px;top:321px;width:1px;height:27px;background:#bdbdbd;"></div>
<div class="a" style="left:207px;top:321px;width:1px;height:27px;background:#bdbdbd;"></div>
<div class="a" style="left:295px;top:321px;width:1px;height:27px;background:#bdbdbd;"></div>
<div class="a" style="left:335px;top:321px;width:1px;height:27px;background:#bdbdbd;"></div>
<div class="a" style="left:422px;top:321px;width:1px;height:27px;background:#bdbdbd;"></div>
<div class="a" style="left:464px;top:321px;width:1px;height:27px;background:#bdbdbd;"></div>
<div class="a" style="left:536px;top:321px;width:1px;height:27px;background:#bdbdbd;"></div>
<div class="a" style="left:578px;top:321px;width:1px;height:27px;background:#bdbdbd;"></div>
<div class="a" style="left:643px;top:321px;width:1px;height:27px;background:#bdbdbd;"></div>
<div class="a" style="left:707px;top:321px;width:1px;height:27px;background:#bdbdbd;"></div>
<div class="a" style="left:771px;top:321px;width:1px;height:27px;background:#bdbdbd;"></div>
<div class="a" style="left:810px;top:321px;width:1px;height:27px;background:#bdbdbd;"></div>
<div class="a" style="left:850px;top:321px;width:1px;height:27px;background:#bdbdbd;"></div>
<div class="a" style="left:0px;top:349px;width:907px;height:27px;background:#f0f0f0;"></div>
<div class="a" style="left:0px;top:349px;width:56px;height:27px;background:#700080;"></div>
<div class="a" style="left:423px;top:349px;width:155px;height:27px;background:#fdf9f6;"></div>
<div class="a" style="left:579px;top:349px;width:192px;height:27px;background:#f0f8fc;"></div>
<div class="a c" style="left:0px;top:350px;width:56px;height:27px;color:#ffffff;font-size:12px;"><span class="k">美冠杯</span></div>
<div class="a c" style="left:57px;top:350px;width:74px;height:27px;color:#333333;font-size:12px;">24-04-11</div>
<div class="a c ns" style="left:132px;top:350px;width:75px;height:27px;color:#000;font-size:12px;"><span class="k">蒙特瑞</span></div>
<div class="a c" style="left:208px;top:350px;width:87px;height:27px;color:#333333;font-size:12px;"><span style="color:#ff0000">3-1</span>(1-0)</div>
<div class="a c" style="left:296px;top:350px;width:39px;height:27px;color:#333333;font-size:12px;">7-2</div>
<div class="a c" style="left:336px;top:350px;width:86px;height:27px;color:#007a00;font-size:12px;"><span class="k">国际迈阿</span><span class="rc">1</span></div>
<div class="a c" style="left:423px;top:350px;width:41px;height:27px;color:#333333;font-size:12px;">0.93</div>
<div class="a c" style="left:465px;top:350px;width:71px;height:27px;color:#2f58a6;font-size:12px;"><span class="k">平手</span></div>
<div class="a c" style="left:537px;top:350px;width:41px;height:27px;color:#333333;font-size:12px;">0.96</div>
<div class="a c" style="left:579px;top:350px;width:64px;height:27px;color:#333333;font-size:12px;">2.28</div>
<div class="a c" style="left:644px;top:350px;width:63px;height:27px;color:#34589c;font-size:12px;">3.77</div>
<div class="a c" style="left:708px;top:350px;width:63px;height:27px;color:#333333;font-size:12px;">2.66</div>
<div class="a c" style="left:772px;top:350px;width:38px;height:27px;color:#007a00;font-size:12px;"><span class="k">负</span></div>
<div class="a c" style="left:811px;top:350px;width:39px;height:27px;color:#007a00;font-size:12px;"><span class="k">输</span></div>
<div class="a c" style="left:851px;top:350px;width:56px;height:27px;color:#ff0000;font-size:12px;"><span class="k">大</span></div>
<div class="a" style="left:0px;top:376px;width:907px;height:1px;background:#bdbdbd;"></div>
<div class="a" style="left:56px;top:349px;width:1px;height:27px;background:#bdbdbd;"></div>
<div class="a" style="left:131px;top:349px;width:1px;height:27px;background:#bdbdbd;"></div>
<div class="a" style="left:207px;top:349px;width:1px;height:27px;background:#bdbdbd;"></div>
<div class="a" style="left:295px;top:349px;width:1px;height:27px;background:#bdbdbd;"></div>
<div class="a" style="left:335px;top:349px;width:1px;height:27px;background:#bdbdbd;"></div>
<div class="a" style="left:422px;top:349px;width:1px;height:27px;background:#bdbdbd;"></div>
<div class="a" style="left:464px;top:349px;width:1px;height:27px;background:#bdbdbd;"></div>
<div class="a" style="left:536px;top:349px;width:1px;height:27px;background:#bdbdbd;"></div>
<div class="a" style="left:578px;top:349px;width:1px;height:27px;background:#bdbdbd;"></div>
<div class="a" style="left:643px;top:349px;width:1px;height:27px;background:#bdbdbd;"></div>
<div class="a" style="left:707px;top:349px;width:1px;height:27px;background:#bdbdbd;"></div>
<div class="a" style="left:771px;top:349px;width:1px;height:27px;background:#bdbdbd;"></div>
<div class="a" style="left:810px;top:349px;width:1px;height:27px;background:#bdbdbd;"></div>
<div class="a" style="left:850px;top:349px;width:1px;height:27px;background:#bdbdbd;"></div>
<div class="a" style="left:0px;top:377px;width:907px;height:27px;background:#ffffff;"></div>
<div class="a c" style="left:0;top:378px;width:907px;height:27px;color:#333333;font-size:12px;"><span><span class="k">近</span><span style="color:#ff0000">10</span><span class="k">场</span>,<span class="k">胜</span>7<span class="k">平</span>1<span class="k">负</span>2, <span class="k">胜率</span><span style="padding:0 1px 0 .5px">:</span><span class="bd" style="background:#ff0000">70%</span> <span class="k">赢率</span><span style="padding:0 1px 0 .5px">:</span><span class="bd" style="background:#ff0000">70%</span> <span class="k">大</span><span style="padding:0 1px 0 .5px">:</span><span class="bd" style="background:#ff0000">70%</span> <span class="k">单率</span><span style="padding:0 1px 0 .5px">:</span><span style="color:#0000ff">50%</span></span></div>
<div class="a" style="left:0px;top:30px;width:907px;height:1px;background:#e5e7ea;"></div>
<div class="a" style="left:0px;top:404px;width:907px;height:1px;background:#bdbdbd;"></div>
<div class="a" style="left:0px;top:405px;width:907px;height:25px;background:#dde4ed;"></div>
<div class="a tt" style="left:19px;top:408px;height:25px;line-height:25px;color:#3159a8;font-weight:bold;font-size:13px;"><span class="k">圣路易斯城</span></div>
<div class="a ft" style="left:298px;top:408px"><span class="k">近</span></div><div class="a smsel" style="left:313px;top:412px"><span>10</span><svg width="10" height="7" viewBox="0 0 10 7"><path d="M0.8 1.1 L4.8 5 L8.8 1.1" stroke="#000" stroke-width="2.3" fill="none"/></svg></div><div class="a ft" style="left:354px;top:408px"><span class="k">场</span></div><div class="a" style="left:369px;top:414px"><span class="cb"></span></div><div class="a ft" style="left:386px;top:408px"><span class="k">同客</span></div><div class="a" style="left:414px;top:414px"><span class="cb on"><svg width="13" height="13" viewBox="0 0 13 13"><path d="M2.5 6.9 L5.3 9.5 L10.4 3.4" stroke="#fff" stroke-width="2.1" fill="none"/></svg></span></div><div class="a ft" style="left:427px;top:408px"><span class="k">美职业</span></div><div class="a" style="left:463px;top:414px"><span class="cb on"><svg width="13" height="13" viewBox="0 0 13 13"><path d="M2.5 6.9 L5.3 9.5 L10.4 3.4" stroke="#fff" stroke-width="2.1" fill="none"/></svg></span></div><div class="a ft" style="left:476px;top:408px"><span class="k">美冠杯</span></div><div class="a" style="left:512px;top:414px"><span class="cb on"><svg width="13" height="13" viewBox="0 0 13 13"><path d="M2.5 6.9 L5.3 9.5 L10.4 3.4" stroke="#fff" stroke-width="2.1" fill="none"/></svg></span></div><div class="a ft" style="left:525px;top:408px"><span class="k">球会友谊</span></div><div class="a" style="left:573px;top:414px"><span class="cb on"><svg width="13" height="13" viewBox="0 0 13 13"><path d="M2.5 6.9 L5.3 9.5 L10.4 3.4" stroke="#fff" stroke-width="2.1" fill="none"/></svg></span></div><div class="a ft" style="left:586px;top:408px"><span class="k">中北美杯</span></div><div class="a" style="left:634px;top:414px"><span class="cb on"><svg width="13" height="13" viewBox="0 0 13 13"><path d="M2.5 6.9 L5.3 9.5 L10.4 3.4" stroke="#fff" stroke-width="2.1" fill="none"/></svg></span></div><div class="a ft" style="left:647px;top:408px"><span class="k">美公开赛</span></div>
<div class="a" style="left:0px;top:430px;width:907px;height:1px;background:#bdbdbd;"></div>
<div class="a" style="left:0px;top:431px;width:907px;height:40px;background:#dde4ed;"></div>
<div class="a" style="left:422px;top:453px;width:485px;height:1px;background:#bdbdbd;"></div>
<div class="a" style="left:0px;top:471px;width:907px;height:1px;background:#bdbdbd;"></div>
<div class="a" style="left:56px;top:431px;width:1px;height:40px;background:#bdbdbd;"></div>
<div class="a" style="left:131px;top:431px;width:1px;height:40px;background:#bdbdbd;"></div>
<div class="a" style="left:218px;top:431px;width:1px;height:40px;background:#bdbdbd;"></div>
<div class="a" style="left:307px;top:431px;width:1px;height:40px;background:#bdbdbd;"></div>
<div class="a" style="left:346px;top:431px;width:1px;height:40px;background:#bdbdbd;"></div>
<div class="a" style="left:422px;top:431px;width:1px;height:40px;background:#bdbdbd;"></div>
<div class="a" style="left:471px;top:454px;width:1px;height:17px;background:#bdbdbd;"></div>
<div class="a" style="left:529px;top:454px;width:1px;height:17px;background:#bdbdbd;"></div>
<div class="a" style="left:578px;top:431px;width:1px;height:40px;background:#bdbdbd;"></div>
<div class="a" style="left:643px;top:454px;width:1px;height:17px;background:#bdbdbd;"></div>
<div class="a" style="left:707px;top:454px;width:1px;height:17px;background:#bdbdbd;"></div>
<div class="a" style="left:771px;top:431px;width:1px;height:40px;background:#bdbdbd;"></div>
<div class="a" style="left:810px;top:454px;width:1px;height:17px;background:#bdbdbd;"></div>
<div class="a" style="left:850px;top:454px;width:1px;height:17px;background:#bdbdbd;"></div>
<div class="a" style="left:422px;top:431px;width:1px;height:40px;background:#bdbdbd;"></div>
<div class="a c" style="left:0px;top:432px;width:56px;height:40px;color:#333333;font-size:12px;"><span class="k">类型</span></div>
<div class="a c" style="left:57px;top:432px;width:74px;height:40px;color:#333333;font-size:12px;"><span class="k">日期</span></div>
<div class="a c" style="left:132px;top:432px;width:86px;height:40px;color:#333333;font-size:12px;"><span class="k">主场</span></div>
<div class="a c" style="left:219px;top:432px;width:88px;height:40px;color:#333333;font-size:12px;"><span class="k">比分</span>(<span class="k">半场</span>)</div>
<div class="a c" style="left:308px;top:432px;width:38px;height:40px;color:#333333;font-size:12px;"><span class="k">角球</span></div>
<div class="a c" style="left:347px;top:432px;width:75px;height:40px;color:#333333;font-size:12px;"><span class="k">客场</span></div>
<div class="a c" style="left:423px;top:455px;width:48px;height:17px;color:#333333;font-size:12px;"><span class="k">主</span></div>
<div class="a c" style="left:472px;top:455px;width:57px;height:17px;color:#333333;font-size:12px;"><span class="k">盘口</span></div>
<div class="a c" style="left:530px;top:455px;width:48px;height:17px;color:#333333;font-size:12px;"><span class="k">客</span></div>
<div class="a c" style="left:579px;top:455px;width:64px;height:17px;color:#333333;font-size:12px;"><span class="k">主</span></div>
<div class="a c" style="left:644px;top:455px;width:63px;height:17px;color:#333333;font-size:12px;"><span class="k">和</span></div>
<div class="a c" style="left:708px;top:455px;width:63px;height:17px;color:#333333;font-size:12px;"><span class="k">客</span></div>
<div class="a c" style="left:772px;top:455px;width:38px;height:17px;color:#333333;font-size:12px;"><span class="k">胜负</span></div>
<div class="a c" style="left:811px;top:455px;width:39px;height:17px;color:#333333;font-size:12px;"><span class="k">让球</span></div>
<div class="a c" style="left:851px;top:455px;width:56px;height:17px;color:#333333;font-size:12px;"><span class="k">进球数</span></div>
<div class="a sel" style="left:449px;top:432px;width:60px;"><span style="font-size:13px">Crow*</span><svg width="10" height="7" viewBox="0 0 10 7"><path d="M1.1 1.1 L5 4.8 L8.9 1.1" stroke="#000" stroke-width="2.2" fill="none"/></svg></div>
<div class="a sel" style="left:516px;top:432px;width:36px;"><span style="font-size:12px"><span class="k">终</span></span><svg width="10" height="7" viewBox="0 0 10 7"><path d="M1.1 1.1 L5 4.8 L8.9 1.1" stroke="#000" stroke-width="2.2" fill="none"/></svg></div>
<div class="a sel" style="left:611px;top:432px;width:84px;"><span style="font-size:12px"><span class="k">胜平负均值</span></span><svg width="10" height="7" viewBox="0 0 10 7"><path d="M1.1 1.1 L5 4.8 L8.9 1.1" stroke="#000" stroke-width="2.2" fill="none"/></svg></div>
<div class="a sel" style="left:703px;top:432px;width:36px;"><span style="font-size:12px"><span class="k">终</span></span><svg width="10" height="7" viewBox="0 0 10 7"><path d="M1.1 1.1 L5 4.8 L8.9 1.1" stroke="#000" stroke-width="2.2" fill="none"/></svg></div>
<div class="a sel" style="left:816px;top:432px;width:48px;"><span style="font-size:12px"><span class="k">全场</span></span><svg width="10" height="7" viewBox="0 0 10 7"><path d="M1.1 1.1 L5 4.8 L8.9 1.1" stroke="#000" stroke-width="2.2" fill="none"/></svg></div>
<div class="a" style="left:0px;top:472px;width:907px;height:27px;background:#ffffff;"></div>
<div class="a" style="left:0px;top:472px;width:56px;height:27px;background:#660033;"></div>
<div class="a" style="left:423px;top:472px;width:155px;height:27px;background:#fdf9f6;"></div>
<div class="a" style="left:579px;top:472px;width:192px;height:27px;background:#f0f8fc;"></div>
<div class="a c" style="left:0px;top:473px;width:56px;height:27px;color:#ffffff;font-size:12px;"><span class="k">美职业</span></div>
<div class="a c" style="left:57px;top:473px;width:74px;height:27px;color:#333333;font-size:12px;">24-05-26</div>
<div class="a c" style="left:132px;top:473px;width:86px;height:27px;color:#007a00;font-size:12px;"><span class="k">圣路易斯</span></div>
<div class="a c" style="left:219px;top:473px;width:88px;height:27px;color:#333333;font-size:12px;"><span style="color:#ff0000">1-2</span>(0-0)</div>
<div class="a c" style="left:308px;top:473px;width:38px;height:27px;color:#333333;font-size:12px;">6-1</div>
<div class="a c ns" style="left:347px;top:473px;width:75px;height:27px;color:#000;font-size:12px;"><span class="k">西雅图音</span></div>
<div class="a c" style="left:423px;top:473px;width:48px;height:27px;color:#333333;font-size:12px;">1.05</div>
<div class="a c" style="left:472px;top:473px;width:57px;height:27px;color:#2f58a6;font-size:12px;"><span class="k">平</span>/<span class="k">半</span></div>
<div class="a c" style="left:530px;top:473px;width:48px;height:27px;color:#333333;font-size:12px;">0.82</div>
<div class="a c" style="left:579px;top:473px;width:64px;height:27px;color:#333333;font-size:12px;">2.24</div>
<div class="a c" style="left:644px;top:473px;width:63px;height:27px;color:#34589c;font-size:12px;">3.32</div>
<div class="a c" style="left:708px;top:473px;width:63px;height:27px;color:#333333;font-size:12px;">3.07</div>
<div class="a c" style="left:772px;top:473px;width:38px;height:27px;color:#007a00;font-size:12px;"><span class="k">负</span></div>
<div class="a c" style="left:811px;top:473px;width:39px;height:27px;color:#007a00;font-size:12px;"><span class="k">输</span></div>
<div class="a c" style="left:851px;top:473px;width:56px;height:27px;color:#ff0000;font-size:12px;"><span class="k">大</span></div>
<div class="a" style="left:0px;top:499px;width:907px;height:1px;background:#bdbdbd;"></div>
<div class="a" style="left:56px;top:472px;width:1px;height:27px;background:#bdbdbd;"></div>
<div class="a" style="left:131px;top:472px;width:1px;height:27px;background:#bdbdbd;"></div>
<div class="a" style="left:218px;top:472px;width:1px;height:27px;background:#bdbdbd;"></div>
<div class="a" style="left:307px;top:472px;width:1px;height:27px;background:#bdbdbd;"></div>
<div class="a" style="left:346px;top:472px;width:1px;height:27px;background:#bdbdbd;"></div>
<div class="a" style="left:422px;top:472px;width:1px;height:27px;background:#bdbdbd;"></div>
<div class="a" style="left:471px;top:472px;width:1px;height:27px;background:#bdbdbd;"></div>
<div class="a" style="left:529px;top:472px;width:1px;height:27px;background:#bdbdbd;"></div>
<div class="a" style="left:578px;top:472px;width:1px;height:27px;background:#bdbdbd;"></div>
<div class="a" style="left:643px;top:472px;width:1px;height:27px;background:#bdbdbd;"></div>
<div class="a" style="left:707px;top:472px;width:1px;height:27px;background:#bdbdbd;"></div>
<div class="a" style="left:771px;top:472px;width:1px;height:27px;background:#bdbdbd;"></div>
<div class="a" style="left:810px;top:472px;width:1px;height:27px;background:#bdbdbd;"></div>
<div class="a" style="left:850px;top:472px;width:1px;height:27px;background:#bdbdbd;"></div>
<div class="a" style="left:0px;top:500px;width:907px;height:27px;background:#f0f0f0;"></div>
<div class="a" style="left:0px;top:500px;width:56px;height:27px;background:#660033;"></div>
<div class="a" style="left:423px;top:500px;width:155px;height:27px;background:#fdf9f6;"></div>
<div class="a" style="left:579px;top:500px;width:192px;height:27px;background:#f0f8fc;"></div>
<div class="a c" style="left:0px;top:501px;width:56px;height:27px;color:#ffffff;font-size:12px;"><span class="k">美职业</span></div>
<div class="a c" style="left:57px;top:501px;width:74px;height:27px;color:#333333;font-size:12px;">24-05-19</div>
<div class="a c ns" style="left:132px;top:501px;width:86px;height:27px;color:#000;font-size:12px;"><span class="k">辛辛那提</span></div>
<div class="a c" style="left:219px;top:501px;width:88px;height:27px;color:#333333;font-size:12px;"><span style="color:#ff0000">3-1</span>(1-0)</div>
<div class="a c" style="left:308px;top:501px;width:38px;height:27px;color:#333333;font-size:12px;">5-4</div>
<div class="a c" style="left:347px;top:501px;width:75px;height:27px;color:#007a00;font-size:12px;"><span class="k">圣路易斯</span></div>
<div class="a c" style="left:423px;top:501px;width:48px;height:27px;color:#333333;font-size:12px;">0.87</div>
<div class="a c" style="left:472px;top:501px;width:57px;height:27px;color:#2f58a6;font-size:12px;"><span class="k">半</span>/<span class="k">一</span></div>
<div class="a c" style="left:530px;top:501px;width:48px;height:27px;color:#333333;font-size:12px;">1.01</div>
<div class="a c" style="left:579px;top:501px;width:64px;height:27px;color:#333333;font-size:12px;">1.76</div>
<div class="a c" style="left:644px;top:501px;width:63px;height:27px;color:#34589c;font-size:12px;">3.82</div>
<div class="a c" style="left:708px;top:501px;width:63px;height:27px;color:#333333;font-size:12px;">4.14</div>
<div class="a c" style="left:772px;top:501px;width:38px;height:27px;color:#007a00;font-size:12px;"><span class="k">负</span></div>
<div class="a c" style="left:811px;top:501px;width:39px;height:27px;color:#007a00;font-size:12px;"><span class="k">输</span></div>
<div class="a c" style="left:851px;top:501px;width:56px;height:27px;color:#ff0000;font-size:12px;"><span class="k">大</span></div>
<div class="a" style="left:0px;top:527px;width:907px;height:1px;background:#bdbdbd;"></div>
<div class="a" style="left:56px;top:500px;width:1px;height:27px;background:#bdbdbd;"></div>
<div class="a" style="left:131px;top:500px;width:1px;height:27px;background:#bdbdbd;"></div>
<div class="a" style="left:218px;top:500px;width:1px;height:27px;background:#bdbdbd;"></div>
<div class="a" style="left:307px;top:500px;width:1px;height:27px;background:#bdbdbd;"></div>
<div class="a" style="left:346px;top:500px;width:1px;height:27px;background:#bdbdbd;"></div>
<div class="a" style="left:422px;top:500px;width:1px;height:27px;background:#bdbdbd;"></div>
<div class="a" style="left:471px;top:500px;width:1px;height:27px;background:#bdbdbd;"></div>
<div class="a" style="left:529px;top:500px;width:1px;height:27px;background:#bdbdbd;"></div>
<div class="a" style="left:578px;top:500px;width:1px;height:27px;background:#bdbdbd;"></div>
<div class="a" style="left:643px;top:500px;width:1px;height:27px;background:#bdbdbd;"></div>
<div class="a" style="left:707px;top:500px;width:1px;height:27px;background:#bdbdbd;"></div>
<div class="a" style="left:771px;top:500px;width:1px;height:27px;background:#bdbdbd;"></div>
<div class="a" style="left:810px;top:500px;width:1px;height:27px;background:#bdbdbd;"></div>
<div class="a" style="left:850px;top:500px;width:1px;height:27px;background:#bdbdbd;"></div>
<div class="a" style="left:0px;top:528px;width:907px;height:27px;background:#ffffff;"></div>
<div class="a" style="left:0px;top:528px;width:56px;height:27px;background:#660033;"></div>
<div class="a" style="left:423px;top:528px;width:155px;height:27px;background:#fdf9f6;"></div>
<div class="a" style="left:579px;top:528px;width:192px;height:27px;background:#f0f8fc;"></div>
<div class="a c" style="left:0px;top:529px;width:56px;height:27px;color:#ffffff;font-size:12px;"><span class="k">美职业</span></div>
<div class="a c" style="left:57px;top:529px;width:74px;height:27px;color:#333333;font-size:12px;">24-05-16</div>
<div class="a c" style="left:132px;top:529px;width:86px;height:27px;color:#007a00;font-size:12px;"><span class="rc">1</span><span class="k">圣路易斯</span></div>
<div class="a c" style="left:219px;top:529px;width:88px;height:27px;color:#333333;font-size:12px;"><span style="color:#ff0000">0-2</span>(0-0)</div>
<div class="a c" style="left:308px;top:529px;width:38px;height:27px;color:#333333;font-size:12px;">8-6</div>
<div class="a c ns" style="left:347px;top:529px;width:75px;height:27px;color:#000;font-size:12px;"><span class="k">洛杉矶</span>F</div>
<div class="a c" style="left:423px;top:529px;width:48px;height:27px;color:#333333;font-size:12px;">0.94</div>
<div class="a c" style="left:472px;top:529px;width:57px;height:27px;color:#2f58a6;font-size:12px;"><span class="k">平手</span></div>
<div class="a c" style="left:530px;top:529px;width:48px;height:27px;color:#333333;font-size:12px;">0.93</div>
<div class="a c" style="left:579px;top:529px;width:64px;height:27px;color:#333333;font-size:12px;">2.44</div>
<div class="a c" style="left:644px;top:529px;width:63px;height:27px;color:#34589c;font-size:12px;">3.66</div>
<div class="a c" style="left:708px;top:529px;width:63px;height:27px;color:#333333;font-size:12px;">2.57</div>
<div class="a c" style="left:772px;top:529px;width:38px;height:27px;color:#007a00;font-size:12px;"><span class="k">负</span></div>
<div class="a c" style="left:811px;top:529px;width:39px;height:27px;color:#007a00;font-size:12px;"><span class="k">输</span></div>
<div class="a c" style="left:851px;top:529px;width:56px;height:27px;color:#007a00;font-size:12px;"><span class="k">小</span></div>
<div class="a" style="left:0px;top:555px;width:907px;height:1px;background:#bdbdbd;"></div>
<div class="a" style="left:56px;top:528px;width:1px;height:27px;background:#bdbdbd;"></div>
<div class="a" style="left:131px;top:528px;width:1px;height:27px;background:#bdbdbd;"></div>
<div class="a" style="left:218px;top:528px;width:1px;height:27px;background:#bdbdbd;"></div>
<div class="a" style="left:307px;top:528px;width:1px;height:27px;background:#bdbdbd;"></div>
<div class="a" style="left:346px;top:528px;width:1px;height:27px;background:#bdbdbd;"></div>
<div class="a" style="left:422px;top:528px;width:1px;height:27px;background:#bdbdbd;"></div>
<div class="a" style="left:471px;top:528px;width:1px;height:27px;background:#bdbdbd;"></div>
<div class="a" style="left:529px;top:528px;width:1px;height:27px;background:#bdbdbd;"></div>
<div class="a" style="left:578px;top:528px;width:1px;height:27px;background:#bdbdbd;"></div>
<div class="a" style="left:643px;top:528px;width:1px;height:27px;background:#bdbdbd;"></div>
<div class="a" style="left:707px;top:528px;width:1px;height:27px;background:#bdbdbd;"></div>
<div class="a" style="left:771px;top:528px;width:1px;height:27px;background:#bdbdbd;"></div>
<div class="a" style="left:810px;top:528px;width:1px;height:27px;background:#bdbdbd;"></div>
<div class="a" style="left:850px;top:528px;width:1px;height:27px;background:#bdbdbd;"></div>
<div class="a" style="left:0px;top:556px;width:907px;height:27px;background:#f0f0f0;"></div>
<div class="a" style="left:0px;top:556px;width:56px;height:27px;background:#660033;"></div>
<div class="a" style="left:423px;top:556px;width:155px;height:27px;background:#fdf9f6;"></div>
<div class="a" style="left:579px;top:556px;width:192px;height:27px;background:#f0f8fc;"></div>
<div class="a c" style="left:0px;top:557px;width:56px;height:27px;color:#ffffff;font-size:12px;"><span class="k">美职业</span></div>
<div class="a c" style="left:57px;top:557px;width:74px;height:27px;color:#333333;font-size:12px;">24-05-12</div>
<div class="a c" style="left:132px;top:557px;width:86px;height:27px;color:#007a00;font-size:12px;"><span class="k">圣路易斯</span></div>
<div class="a c" style="left:219px;top:557px;width:88px;height:27px;color:#333333;font-size:12px;"><span style="color:#ff0000">3-1</span>(1-0)</div>
<div class="a c" style="left:308px;top:557px;width:38px;height:27px;color:#333333;font-size:12px;">5-3</div>
<div class="a c ns" style="left:347px;top:557px;width:75px;height:27px;color:#000;font-size:12px;"><span class="k">芝加哥火</span></div>
<div class="a c" style="left:423px;top:557px;width:48px;height:27px;color:#333333;font-size:12px;">0.92</div>
<div class="a c" style="left:472px;top:557px;width:57px;height:27px;color:#2f58a6;font-size:12px;"><span class="k">半</span>/<span class="k">一</span></div>
<div class="a c" style="left:530px;top:557px;width:48px;height:27px;color:#333333;font-size:12px;">0.96</div>
<div class="a c" style="left:579px;top:557px;width:64px;height:27px;color:#333333;font-size:12px;">1.67</div>
<div class="a c" style="left:644px;top:557px;width:63px;height:27px;color:#34589c;font-size:12px;">4.06</div>
<div class="a c" style="left:708px;top:557px;width:63px;height:27px;color:#333333;font-size:12px;">4.43</div>
<div class="a c" style="left:772px;top:557px;width:38px;height:27px;color:#ff0000;font-size:12px;"><span class="k">胜</span></div>
<div class="a c" style="left:811px;top:557px;width:39px;height:27px;color:#ff0000;font-size:12px;"><span class="k">赢</span></div>
<div class="a c" style="left:851px;top:557px;width:56px;height:27px;color:#ff0000;font-size:12px;"><span class="k">大</span></div>
<div class="a" style="left:0px;top:583px;width:907px;height:1px;background:#bdbdbd;"></div>
<div class="a" style="left:56px;top:556px;width:1px;height:27px;background:#bdbdbd;"></div>
<div class="a" style="left:131px;top:556px;width:1px;height:27px;background:#bdbdbd;"></div>
<div class="a" style="left:218px;top:556px;width:1px;height:27px;background:#bdbdbd;"></div>
<div class="a" style="left:307px;top:556px;width:1px;height:27px;background:#bdbdbd;"></div>
<div class="a" style="left:346px;top:556px;width:1px;height:27px;background:#bdbdbd;"></div>
<div class="a" style="left:422px;top:556px;width:1px;height:27px;background:#bdbdbd;"></div>
<div class="a" style="left:471px;top:556px;width:1px;height:27px;background:#bdbdbd;"></div>
<div class="a" style="left:529px;top:556px;width:1px;height:27px;background:#bdbdbd;"></div>
<div class="a" style="left:578px;top:556px;width:1px;height:27px;background:#bdbdbd;"></div>
<div class="a" style="left:643px;top:556px;width:1px;height:27px;background:#bdbdbd;"></div>
<div class="a" style="left:707px;top:556px;width:1px;height:27px;background:#bdbdbd;"></div>
<div class="a" style="left:771px;top:556px;width:1px;height:27px;background:#bdbdbd;"></div>
<div class="a" style="left:810px;top:556px;width:1px;height:27px;background:#bdbdbd;"></div>
<div class="a" style="left:850px;top:556px;width:1px;height:27px;background:#bdbdbd;"></div>
<div class="a" style="left:0px;top:584px;width:907px;height:27px;background:#ffffff;"></div>
<div class="a" style="left:0px;top:584px;width:56px;height:27px;background:#660033;"></div>
<div class="a" style="left:423px;top:584px;width:155px;height:27px;background:#fdf9f6;"></div>
<div class="a" style="left:579px;top:584px;width:192px;height:27px;background:#f0f8fc;"></div>
<div class="a c" style="left:0px;top:585px;width:56px;height:27px;color:#ffffff;font-size:12px;"><span class="k">美职业</span></div>
<div class="a c" style="left:57px;top:585px;width:74px;height:27px;color:#333333;font-size:12px;">24-05-05</div>
<div class="a c ns" style="left:132px;top:585px;width:86px;height:27px;color:#000;font-size:12px;"><span class="k">休斯敦迪</span></div>
<div class="a c" style="left:219px;top:585px;width:88px;height:27px;color:#333333;font-size:12px;"><span style="color:#ff0000">0-0</span>(0-0)</div>
<div class="a c" style="left:308px;top:585px;width:38px;height:27px;color:#333333;font-size:12px;">5-7</div>
<div class="a c" style="left:347px;top:585px;width:75px;height:27px;color:#007a00;font-size:12px;"><span class="k">圣路易斯</span></div>
<div class="a c" style="left:423px;top:585px;width:48px;height:27px;color:#333333;font-size:12px;">1.06</div>
<div class="a c" style="left:472px;top:585px;width:57px;height:27px;color:#2f58a6;font-size:12px;"><span class="k">半球</span></div>
<div class="a c" style="left:530px;top:585px;width:48px;height:27px;color:#333333;font-size:12px;">0.82</div>
<div class="a c" style="left:579px;top:585px;width:64px;height:27px;color:#333333;font-size:12px;">2.00</div>
<div class="a c" style="left:644px;top:585px;width:63px;height:27px;color:#34589c;font-size:12px;">3.45</div>
<div class="a c" style="left:708px;top:585px;width:63px;height:27px;color:#333333;font-size:12px;">3.53</div>
<div class="a c" style="left:772px;top:585px;width:38px;height:27px;color:#0000ff;font-size:12px;"><span class="k">平</span></div>
<div class="a c" style="left:811px;top:585px;width:39px;height:27px;color:#ff0000;font-size:12px;"><span class="k">赢</span></div>
<div class="a c" style="left:851px;top:585px;width:56px;height:27px;color:#007a00;font-size:12px;"><span class="k">小</span></div>
<div class="a" style="left:0px;top:611px;width:907px;height:1px;background:#bdbdbd;"></div>
<div class="a" style="left:56px;top:584px;width:1px;height:27px;background:#bdbdbd;"></div>
<div class="a" style="left:131px;top:584px;width:1px;height:27px;background:#bdbdbd;"></div>
<div class="a" style="left:218px;top:584px;width:1px;height:27px;background:#bdbdbd;"></div>
<div class="a" style="left:307px;top:584px;width:1px;height:27px;background:#bdbdbd;"></div>
<div class="a" style="left:346px;top:584px;width:1px;height:27px;background:#bdbdbd;"></div>
<div class="a" style="left:422px;top:584px;width:1px;height:27px;background:#bdbdbd;"></div>
<div class="a" style="left:471px;top:584px;width:1px;height:27px;background:#bdbdbd;"></div>
<div class="a" style="left:529px;top:584px;width:1px;height:27px;background:#bdbdbd;"></div>
<div class="a" style="left:578px;top:584px;width:1px;height:27px;background:#bdbdbd;"></div>
<div class="a" style="left:643px;top:584px;width:1px;height:27px;background:#bdbdbd;"></div>
<div class="a" style="left:707px;top:584px;width:1px;height:27px;background:#bdbdbd;"></div>
<div class="a" style="left:771px;top:584px;width:1px;height:27px;background:#bdbdbd;"></div>
<div class="a" style="left:810px;top:584px;width:1px;height:27px;background:#bdbdbd;"></div>
<div class="a" style="left:850px;top:584px;width:1px;height:27px;background:#bdbdbd;"></div>
<div class="a" style="left:0px;top:612px;width:907px;height:27px;background:#f0f0f0;"></div>
<div class="a" style="left:0px;top:612px;width:56px;height:27px;background:#660033;"></div>
<div class="a" style="left:423px;top:612px;width:155px;height:27px;background:#fdf9f6;"></div>
<div class="a" style="left:579px;top:612px;width:192px;height:27px;background:#f0f8fc;"></div>
<div class="a c" style="left:0px;top:613px;width:56px;height:27px;color:#ffffff;font-size:12px;"><span class="k">美职业</span></div>
<div class="a c" style="left:57px;top:613px;width:74px;height:27px;color:#333333;font-size:12px;">24-04-21</div>
<div class="a c ns" style="left:132px;top:613px;width:86px;height:27px;color:#000;font-size:12px;"><span class="k">肯萨斯竞</span></div>
<div class="a c" style="left:219px;top:613px;width:88px;height:27px;color:#333333;font-size:12px;"><span style="color:#ff0000">3-3</span>(1-2)</div>
<div class="a c" style="left:308px;top:613px;width:38px;height:27px;color:#333333;font-size:12px;">2-6</div>
<div class="a c" style="left:347px;top:613px;width:75px;height:27px;color:#007a00;font-size:12px;"><span class="k">圣路易斯</span></div>
<div class="a c" style="left:423px;top:613px;width:48px;height:27px;color:#333333;font-size:12px;">0.97</div>
<div class="a c" style="left:472px;top:613px;width:57px;height:27px;color:#2f58a6;font-size:12px;"><span class="k">半球</span></div>
<div class="a c" style="left:530px;top:613px;width:48px;height:27px;color:#333333;font-size:12px;">0.92</div>
<div class="a c" style="left:579px;top:613px;width:64px;height:27px;color:#333333;font-size:12px;">1.94</div>
<div class="a c" style="left:644px;top:613px;width:63px;height:27px;color:#34589c;font-size:12px;">3.60</div>
<div class="a c" style="left:708px;top:613px;width:63px;height:27px;color:#333333;font-size:12px;">3.56</div>
<div class="a c" style="left:772px;top:613px;width:38px;height:27px;color:#0000ff;font-size:12px;"><span class="k">平</span></div>
<div class="a c" style="left:811px;top:613px;width:39px;height:27px;color:#ff0000;font-size:12px;"><span class="k">赢</span></div>
<div class="a c" style="left:851px;top:613px;width:56px;height:27px;color:#ff0000;font-size:12px;"><span class="k">大</span></div>
<div class="a" style="left:0px;top:639px;width:907px;height:1px;background:#bdbdbd;"></div>
<div class="a" style="left:56px;top:612px;width:1px;height:27px;background:#bdbdbd;"></div>
<div class="a" style="left:131px;top:612px;width:1px;height:27px;background:#bdbdbd;"></div>
<div class="a" style="left:218px;top:612px;width:1px;height:27px;background:#bdbdbd;"></div>
<div class="a" style="left:307px;top:612px;width:1px;height:27px;background:#bdbdbd;"></div>
<div class="a" style="left:346px;top:612px;width:1px;height:27px;background:#bdbdbd;"></div>
<div class="a" style="left:422px;top:612px;width:1px;height:27px;background:#bdbdbd;"></div>
<div class="a" style="left:471px;top:612px;width:1px;height:27px;background:#bdbdbd;"></div>
<div class="a" style="left:529px;top:612px;width:1px;height:27px;background:#bdbdbd;"></div>
<div class="a" style="left:578px;top:612px;width:1px;height:27px;background:#bdbdbd;"></div>
<div class="a" style="left:643px;top:612px;width:1px;height:27px;background:#bdbdbd;"></div>
<div class="a" style="left:707px;top:612px;width:1px;height:27px;background:#bdbdbd;"></div>
<div class="a" style="left:771px;top:612px;width:1px;height:27px;background:#bdbdbd;"></div>
<div class="a" style="left:810px;top:612px;width:1px;height:27px;background:#bdbdbd;"></div>
<div class="a" style="left:850px;top:612px;width:1px;height:27px;background:#bdbdbd;"></div>
<div class="a" style="left:0px;top:640px;width:907px;height:27px;background:#ffffff;"></div>
<div class="a" style="left:0px;top:640px;width:56px;height:27px;background:#660033;"></div>
<div class="a" style="left:423px;top:640px;width:155px;height:27px;background:#fdf9f6;"></div>
<div class="a" style="left:579px;top:640px;width:192px;height:27px;background:#f0f8fc;"></div>
<div class="a c" style="left:0px;top:641px;width:56px;height:27px;color:#ffffff;font-size:12px;"><span class="k">美职业</span></div>
<div class="a c" style="left:57px;top:641px;width:74px;height:27px;color:#333333;font-size:12px;">24-04-15</div>
<div class="a c" style="left:132px;top:641px;width:86px;height:27px;color:#007a00;font-size:12px;"><span class="k">圣路易斯</span></div>
<div class="a c" style="left:219px;top:641px;width:88px;height:27px;color:#333333;font-size:12px;"><span style="color:#ff0000">1-0</span>(0-0)</div>
<div class="a c" style="left:308px;top:641px;width:38px;height:27px;color:#333333;font-size:12px;">5-6</div>
<div class="a c ns" style="left:347px;top:641px;width:75px;height:27px;color:#000;font-size:12px;"><span class="k">奥斯汀</span>F</div>
<div class="a c" style="left:423px;top:641px;width:48px;height:27px;color:#333333;font-size:12px;">0.93</div>
<div class="a c" style="left:472px;top:641px;width:57px;height:27px;color:#2f58a6;font-size:12px;"><span class="k">半球</span></div>
<div class="a c" style="left:530px;top:641px;width:48px;height:27px;color:#333333;font-size:12px;">0.96</div>
<div class="a c" style="left:579px;top:641px;width:64px;height:27px;color:#333333;font-size:12px;">1.82</div>
<div class="a c" style="left:644px;top:641px;width:63px;height:27px;color:#34589c;font-size:12px;">3.76</div>
<div class="a c" style="left:708px;top:641px;width:63px;height:27px;color:#333333;font-size:12px;">3.91</div>
<div class="a c" style="left:772px;top:641px;width:38px;height:27px;color:#ff0000;font-size:12px;"><span class="k">胜</span></div>
<div class="a c" style="left:811px;top:641px;width:39px;height:27px;color:#ff0000;font-size:12px;"><span class="k">赢</span></div>
<div class="a c" style="left:851px;top:641px;width:56px;height:27px;color:#007a00;font-size:12px;"><span class="k">小</span></div>
<div class="a" style="left:0px;top:667px;width:907px;height:1px;background:#bdbdbd;"></div>
<div class="a" style="left:56px;top:640px;width:1px;height:27px;background:#bdbdbd;"></div>
<div class="a" style="left:131px;top:640px;width:1px;height:27px;background:#bdbdbd;"></div>
<div class="a" style="left:218px;top:640px;width:1px;height:27px;background:#bdbdbd;"></div>
<div class="a" style="left:307px;top:640px;width:1px;height:27px;background:#bdbdbd;"></div>
<div class="a" style="left:346px;top:640px;width:1px;height:27px;background:#bdbdbd;"></div>
<div class="a" style="left:422px;top:640px;width:1px;height:27px;background:#bdbdbd;"></div>
<div class="a" style="left:471px;top:640px;width:1px;height:27px;background:#bdbdbd;"></div>
<div class="a" style="left:529px;top:640px;width:1px;height:27px;background:#bdbdbd;"></div>
<div class="a" style="left:578px;top:640px;width:1px;height:27px;background:#bdbdbd;"></div>
<div class="a" style="left:643px;top:640px;width:1px;height:27px;background:#bdbdbd;"></div>
<div class="a" style="left:707px;top:640px;width:1px;height:27px;background:#bdbdbd;"></div>
<div class="a" style="left:771px;top:640px;width:1px;height:27px;background:#bdbdbd;"></div>
<div class="a" style="left:810px;top:640px;width:1px;height:27px;background:#bdbdbd;"></div>
<div class="a" style="left:850px;top:640px;width:1px;height:27px;background:#bdbdbd;"></div>
<div class="a" style="left:0px;top:668px;width:907px;height:27px;background:#f0f0f0;"></div>
<div class="a" style="left:0px;top:668px;width:56px;height:27px;background:#660033;"></div>
<div class="a" style="left:423px;top:668px;width:155px;height:27px;background:#fdf9f6;"></div>
<div class="a" style="left:579px;top:668px;width:192px;height:27px;background:#f0f8fc;"></div>
<div class="a c" style="left:0px;top:669px;width:56px;height:27px;color:#ffffff;font-size:12px;"><span class="k">美职业</span></div>
<div class="a c" style="left:57px;top:669px;width:74px;height:27px;color:#333333;font-size:12px;">24-04-07</div>
<div class="a c" style="left:132px;top:669px;width:86px;height:27px;color:#007a00;font-size:12px;"><span class="k">圣路易斯</span></div>
<div class="a c" style="left:219px;top:669px;width:88px;height:27px;color:#333333;font-size:12px;"><span style="color:#ff0000">0-0</span>(0-0)</div>
<div class="a c" style="left:308px;top:669px;width:38px;height:27px;color:#333333;font-size:12px;">9-2</div>
<div class="a c ns" style="left:347px;top:669px;width:75px;height:27px;color:#000;font-size:12px;"><span class="k">达拉斯</span>F</div>
<div class="a c" style="left:423px;top:669px;width:48px;height:27px;color:#333333;font-size:12px;">0.95</div>
<div class="a c" style="left:472px;top:669px;width:57px;height:27px;color:#2f58a6;font-size:12px;"><span class="k">半</span>/<span class="k">一</span></div>
<div class="a c" style="left:530px;top:669px;width:48px;height:27px;color:#333333;font-size:12px;">0.93</div>
<div class="a c" style="left:579px;top:669px;width:64px;height:27px;color:#333333;font-size:12px;">1.73</div>
<div class="a c" style="left:644px;top:669px;width:63px;height:27px;color:#34589c;font-size:12px;">3.73</div>
<div class="a c" style="left:708px;top:669px;width:63px;height:27px;color:#333333;font-size:12px;">4.35</div>
<div class="a c" style="left:772px;top:669px;width:38px;height:27px;color:#0000ff;font-size:12px;"><span class="k">平</span></div>
<div class="a c" style="left:811px;top:669px;width:39px;height:27px;color:#007a00;font-size:12px;"><span class="k">输</span></div>
<div class="a c" style="left:851px;top:669px;width:56px;height:27px;color:#007a00;font-size:12px;"><span class="k">小</span></div>
<div class="a" style="left:0px;top:695px;width:907px;height:1px;background:#bdbdbd;"></div>
<div class="a" style="left:56px;top:668px;width:1px;height:27px;background:#bdbdbd;"></div>
<div class="a" style="left:131px;top:668px;width:1px;height:27px;background:#bdbdbd;"></div>
<div class="a" style="left:218px;top:668px;width:1px;height:27px;background:#bdbdbd;"></div>
<div class="a" style="left:307px;top:668px;width:1px;height:27px;background:#bdbdbd;"></div>
<div class="a" style="left:346px;top:668px;width:1px;height:27px;background:#bdbdbd;"></div>
<div class="a" style="left:422px;top:668px;width:1px;height:27px;background:#bdbdbd;"></div>
<div class="a" style="left:471px;top:668px;width:1px;height:27px;background:#bdbdbd;"></div>
<div class="a" style="left:529px;top:668px;width:1px;height:27px;background:#bdbdbd;"></div>
<div class="a" style="left:578px;top:668px;width:1px;height:27px;background:#bdbdbd;"></div>
<div class="a" style="left:643px;top:668px;width:1px;height:27px;background:#bdbdbd;"></div>
<div class="a" style="left:707px;top:668px;width:1px;height:27px;background:#bdbdbd;"></div>
<div class="a" style="left:771px;top:668px;width:1px;height:27px;background:#bdbdbd;"></div>
<div class="a" style="left:810px;top:668px;width:1px;height:27px;background:#bdbdbd;"></div>
<div class="a" style="left:850px;top:668px;width:1px;height:27px;background:#bdbdbd;"></div>
<div class="a" style="left:0px;top:696px;width:907px;height:27px;background:#ffffff;"></div>
<div class="a" style="left:0px;top:696px;width:56px;height:27px;background:#660033;"></div>
<div class="a" style="left:423px;top:696px;width:155px;height:27px;background:#fdf9f6;"></div>
<div class="a" style="left:579px;top:696px;width:192px;height:27px;background:#f0f8fc;"></div>
<div class="a c" style="left:0px;top:697px;width:56px;height:27px;color:#ffffff;font-size:12px;"><span class="k">美职业</span></div>
<div class="a c" style="left:57px;top:697px;width:74px;height:27px;color:#333333;font-size:12px;">24-03-31</div>
<div class="a c ns" style="left:132px;top:697px;width:86px;height:27px;color:#000;font-size:12px;"><span class="k">皇家盐湖</span></div>
<div class="a c" style="left:219px;top:697px;width:88px;height:27px;color:#333333;font-size:12px;"><span style="color:#ff0000">3-1</span>(0-1)</div>
<div class="a c" style="left:308px;top:697px;width:38px;height:27px;color:#333333;font-size:12px;">11-4</div>
<div class="a c" style="left:347px;top:697px;width:75px;height:27px;color:#007a00;font-size:12px;"><span class="k">圣路易斯</span></div>
<div class="a c" style="left:423px;top:697px;width:48px;height:27px;color:#333333;font-size:12px;">0.88</div>
<div class="a c" style="left:472px;top:697px;width:57px;height:27px;color:#2f58a6;font-size:12px;"><span class="k">半</span>/<span class="k">一</span></div>
<div class="a c" style="left:530px;top:697px;width:48px;height:27px;color:#333333;font-size:12px;">1.00</div>
<div class="a c" style="left:579px;top:697px;width:64px;height:27px;color:#333333;font-size:12px;">1.62</div>
<div class="a c" style="left:644px;top:697px;width:63px;height:27px;color:#34589c;font-size:12px;">4.02</div>
<div class="a c" style="left:708px;top:697px;width:63px;height:27px;color:#333333;font-size:12px;">4.75</div>
<div class="a c" style="left:772px;top:697px;width:38px;height:27px;color:#007a00;font-size:12px;"><span class="k">负</span></div>
<div class="a c" style="left:811px;top:697px;width:39px;height:27px;color:#007a00;font-size:12px;"><span class="k">输</span></div>
<div class="a c" style="left:851px;top:697px;width:56px;height:27px;color:#ff0000;font-size:12px;"><span class="k">大</span></div>
<div class="a" style="left:0px;top:723px;width:907px;height:1px;background:#bdbdbd;"></div>
<div class="a" style="left:56px;top:696px;width:1px;height:27px;background:#bdbdbd;"></div>
<div class="a" style="left:131px;top:696px;width:1px;height:27px;background:#bdbdbd;"></div>
<div class="a" style="left:218px;top:696px;width:1px;height:27px;background:#bdbdbd;"></div>
<div class="a" style="left:307px;top:696px;width:1px;height:27px;background:#bdbdbd;"></div>
<div class="a" style="left:346px;top:696px;width:1px;height:27px;background:#bdbdbd;"></div>
<div class="a" style="left:422px;top:696px;width:1px;height:27px;background:#bdbdbd;"></div>
<div class="a" style="left:471px;top:696px;width:1px;height:27px;background:#bdbdbd;"></div>
<div class="a" style="left:529px;top:696px;width:1px;height:27px;background:#bdbdbd;"></div>
<div class="a" style="left:578px;top:696px;width:1px;height:27px;background:#bdbdbd;"></div>
<div class="a" style="left:643px;top:696px;width:1px;height:27px;background:#bdbdbd;"></div>
<div class="a" style="left:707px;top:696px;width:1px;height:27px;background:#bdbdbd;"></div>
<div class="a" style="left:771px;top:696px;width:1px;height:27px;background:#bdbdbd;"></div>
<div class="a" style="left:810px;top:696px;width:1px;height:27px;background:#bdbdbd;"></div>
<div class="a" style="left:850px;top:696px;width:1px;height:27px;background:#bdbdbd;"></div>
<div class="a" style="left:0px;top:724px;width:907px;height:27px;background:#f0f0f0;"></div>
<div class="a" style="left:0px;top:724px;width:56px;height:27px;background:#660033;"></div>
<div class="a" style="left:423px;top:724px;width:155px;height:27px;background:#fdf9f6;"></div>
<div class="a" style="left:579px;top:724px;width:192px;height:27px;background:#f0f8fc;"></div>
<div class="a c" style="left:0px;top:725px;width:56px;height:27px;color:#ffffff;font-size:12px;"><span class="k">美职业</span></div>
<div class="a c" style="left:57px;top:725px;width:74px;height:27px;color:#333333;font-size:12px;">24-03-24</div>
<div class="a c" style="left:132px;top:725px;width:86px;height:27px;color:#007a00;font-size:12px;"><span class="k">圣路易斯</span></div>
<div class="a c" style="left:219px;top:725px;width:88px;height:27px;color:#333333;font-size:12px;"><span style="color:#ff0000">2-2</span>(1-2)</div>
<div class="a c" style="left:308px;top:725px;width:38px;height:27px;color:#333333;font-size:12px;">6-0</div>
<div class="a c ns" style="left:347px;top:725px;width:75px;height:27px;color:#000;font-size:12px;"><span class="k">华盛顿联</span></div>
<div class="a c" style="left:423px;top:725px;width:48px;height:27px;color:#333333;font-size:12px;">0.93</div>
<div class="a c" style="left:472px;top:725px;width:57px;height:27px;color:#2f58a6;font-size:12px;"><span class="k">半球</span></div>
<div class="a c" style="left:530px;top:725px;width:48px;height:27px;color:#333333;font-size:12px;">0.95</div>
<div class="a c" style="left:579px;top:725px;width:64px;height:27px;color:#333333;font-size:12px;">1.89</div>
<div class="a c" style="left:644px;top:725px;width:63px;height:27px;color:#34589c;font-size:12px;">3.72</div>
<div class="a c" style="left:708px;top:725px;width:63px;height:27px;color:#333333;font-size:12px;">3.61</div>
<div class="a c" style="left:772px;top:725px;width:38px;height:27px;color:#0000ff;font-size:12px;"><span class="k">平</span></div>
<div class="a c" style="left:811px;top:725px;width:39px;height:27px;color:#007a00;font-size:12px;"><span class="k">输</span></div>
<div class="a c" style="left:851px;top:725px;width:56px;height:27px;color:#ff0000;font-size:12px;"><span class="k">大</span></div>
<div class="a" style="left:0px;top:751px;width:907px;height:1px;background:#bdbdbd;"></div>
<div class="a" style="left:56px;top:724px;width:1px;height:27px;background:#bdbdbd;"></div>
<div class="a" style="left:131px;top:724px;width:1px;height:27px;background:#bdbdbd;"></div>
<div class="a" style="left:218px;top:724px;width:1px;height:27px;background:#bdbdbd;"></div>
<div class="a" style="left:307px;top:724px;width:1px;height:27px;background:#bdbdbd;"></div>
<div class="a" style="left:346px;top:724px;width:1px;height:27px;background:#bdbdbd;"></div>
<div class="a" style="left:422px;top:724px;width:1px;height:27px;background:#bdbdbd;"></div>
<div class="a" style="left:471px;top:724px;width:1px;height:27px;background:#bdbdbd;"></div>
<div class="a" style="left:529px;top:724px;width:1px;height:27px;background:#bdbdbd;"></div>
<div class="a" style="left:578px;top:724px;width:1px;height:27px;background:#bdbdbd;"></div>
<div class="a" style="left:643px;top:724px;width:1px;height:27px;background:#bdbdbd;"></div>
<div class="a" style="left:707px;top:724px;width:1px;height:27px;background:#bdbdbd;"></div>
<div class="a" style="left:771px;top:724px;width:1px;height:27px;background:#bdbdbd;"></div>
<div class="a" style="left:810px;top:724px;width:1px;height:27px;background:#bdbdbd;"></div>
<div class="a" style="left:850px;top:724px;width:1px;height:27px;background:#bdbdbd;"></div>
<div class="a" style="left:0px;top:752px;width:907px;height:27px;background:#ffffff;"></div>
<div class="a c" style="left:0;top:753px;width:907px;height:27px;color:#333333;font-size:12px;"><span><span class="k">近</span><span style="color:#ff0000">10</span><span class="k">场</span>,<span class="k">胜</span>2<span class="k">平</span>4<span class="k">负</span>4, <span class="k">胜率</span><span style="padding:0 1px 0 .5px">:</span><span class="bd" style="background:#007a00">20%</span> <span class="k">赢率</span><span style="padding:0 1px 0 .5px">:</span><span style="color:#0000ff">40%</span> <span class="k">大</span><span style="padding:0 1px 0 .5px">:</span><span style="color:#0000ff">60%</span> <span class="k">单率</span><span style="padding:0 1px 0 .5px">:</span><span style="color:#007a00">20%</span></span></div>
<div class="a" style="left:0px;top:779px;width:907px;height:1px;background:#d8d2cd;"></div>
<div class="a" style="left:0px;top:780px;width:907px;height:30px;background:#1b95d4;"></div>
<div class="a c" style="left:0;top:781px;width:907px;height:30px;color:#fff;"><span class="bt" style="font-weight:bold;font-size:14px"><span class="k">联赛盘路走势</span></span></div></body></html>
